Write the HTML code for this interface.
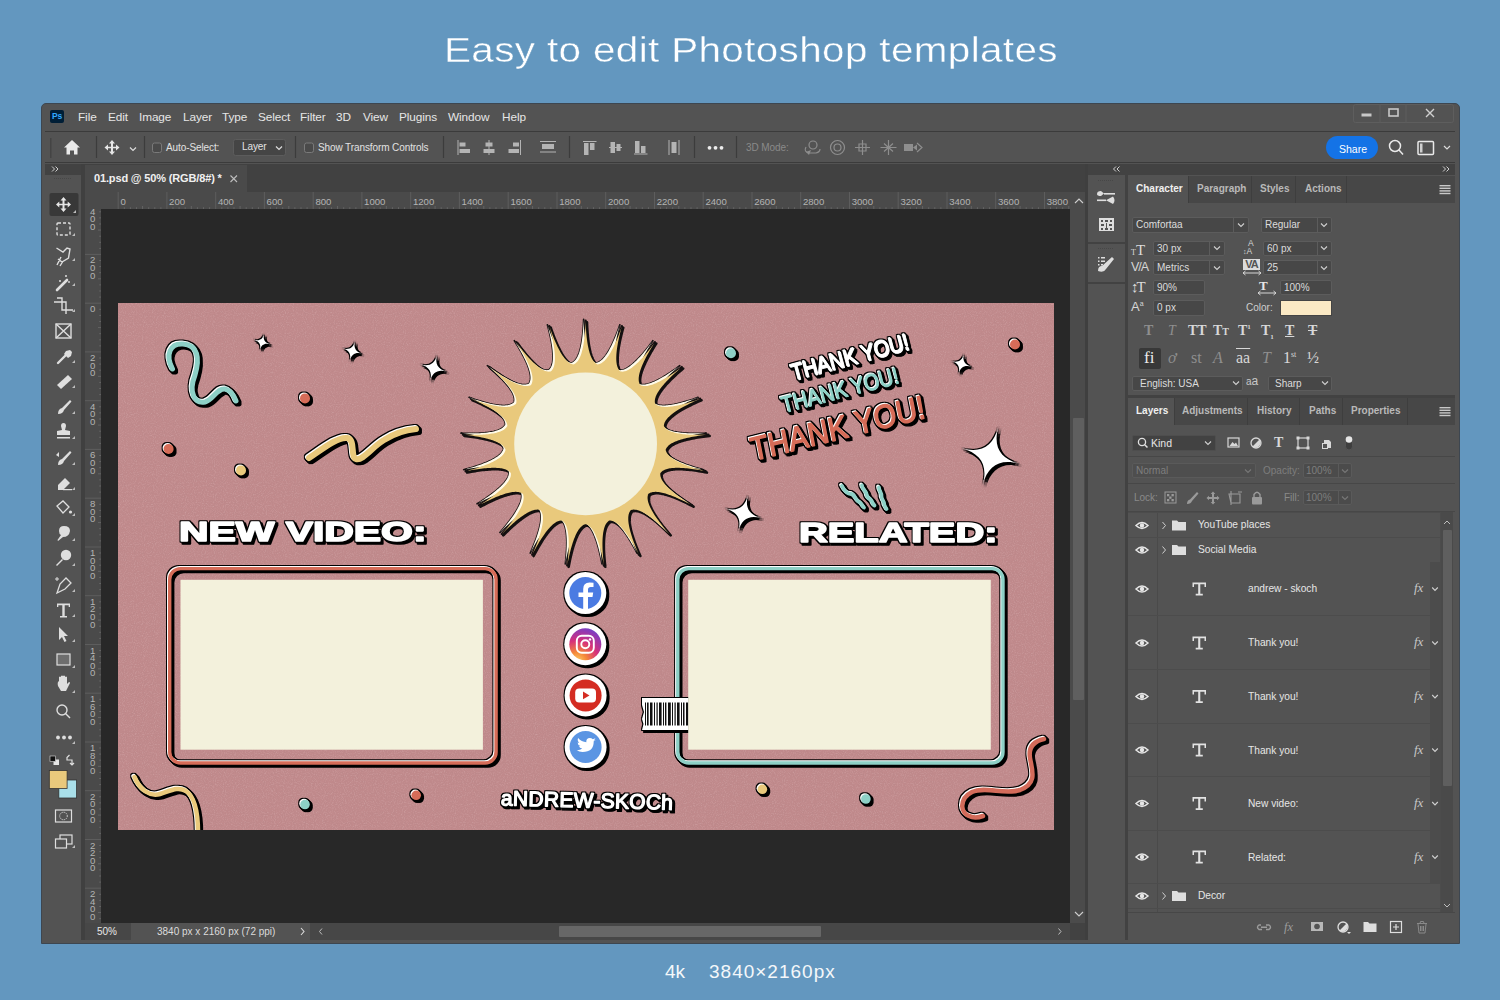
<!DOCTYPE html>
<html><head><meta charset="utf-8">
<style>
*{margin:0;padding:0;box-sizing:border-box}
html,body{width:1500px;height:1000px;overflow:hidden;background:#6397bf;font-family:"Liberation Sans",sans-serif;}
.a{position:absolute}
#title{left:444px;top:30px;white-space:nowrap;color:#fff;font-size:35px;letter-spacing:0.3px;transform:scaleX(1.156);transform-origin:0 0;-webkit-text-stroke:0.4px #6397bf}
#foot{left:0;top:960px;width:1500px;text-align:center;color:#eef3f8;font-size:18px;letter-spacing:1px}
#win{left:41px;top:103px;width:1419px;height:841px;background:#535353;border:1px solid #3d4650;border-radius:5px 5px 0 0}
.menu{top:110px;color:#e6e6e6;font-size:11.8px;letter-spacing:-0.1px}
.opt{top:142px;color:#e2e2e2;font-size:10px;letter-spacing:-0.1px}
#opt{left:45px;top:131px;width:1410px;height:32px;background:#535353;border-top:1px solid #3b3b3b;border-bottom:1px solid #3b3b3b}
#tabbar{left:45px;top:164px;width:1041px;height:28px;background:#414141}
#doctab{left:85px;top:165px;width:162px;height:27px;background:#4a4a4a;color:#f0f0f0;font-size:11px;font-weight:bold;padding:7px 0 0 9px;letter-spacing:-0.15px}
#tools{left:45px;top:164px;width:36px;height:776px;background:#535353}
#sep1{left:81px;top:164px;width:4px;height:776px;background:#404040}
#rulerT{left:85px;top:192px;width:985px;height:17px;background:#474747}
#rulerL{left:85px;top:192px;width:16px;height:731px;background:#474747}
#cv{left:101px;top:209px;width:969px;height:714px;background:#282828}
#vscroll{left:1070px;top:192px;width:18px;height:731px;background:#4a4a4a}
#status{left:85px;top:923px;width:1003px;height:17px;background:#474747;color:#ddd;font-size:10.5px}
#dock{left:1088px;top:164px;width:37px;height:776px;background:#474747}
#panel{left:1128px;top:164px;width:327px;height:776px;background:#535353}
#art{left:118px;top:303px;width:936px;height:527px;background:#c48a8e;overflow:hidden}
</style></head>
<body>
<div id="title" class="a">Easy to edit Photoshop templates</div>
<div id="win" class="a"></div>
<div id="opt" class="a"></div>

<!-- menu bar -->
<div class="a" style="left:50px;top:110px;width:14px;height:13px;background:#001e36;border-radius:2px;color:#31a8ff;font-size:8.5px;font-weight:bold;line-height:13px;text-align:center;letter-spacing:-0.2px">Ps</div>
<div class="a menu" style="left:78px">File</div>
<div class="a menu" style="left:108px">Edit</div>
<div class="a menu" style="left:139px">Image</div>
<div class="a menu" style="left:183px">Layer</div>
<div class="a menu" style="left:222px">Type</div>
<div class="a menu" style="left:258px">Select</div>
<div class="a menu" style="left:300px">Filter</div>
<div class="a menu" style="left:336px">3D</div>
<div class="a menu" style="left:363px">View</div>
<div class="a menu" style="left:399px">Plugins</div>
<div class="a menu" style="left:448px">Window</div>
<div class="a menu" style="left:502px">Help</div>
<svg class="a" style="left:1353px;top:104px" width="101" height="20" viewBox="0 0 101 20">
<rect x="0.5" y="0.5" width="100" height="18" rx="2" fill="none" stroke="#5e5e5e"/>
<line x1="27" y1="0.5" x2="27" y2="18.5" stroke="#5e5e5e"/><line x1="53" y1="0.5" x2="53" y2="18.5" stroke="#5e5e5e"/>
<rect x="8.5" y="9.5" width="10" height="3" fill="#c8c8c8"/>
<rect x="36" y="5" width="9" height="7" fill="none" stroke="#c8c8c8" stroke-width="1.6"/>
<path d="M73 5 L81 13 M81 5 L73 13" stroke="#d0d0d0" stroke-width="1.4"/>
</svg>
<!-- options bar -->
<svg class="a" style="left:45px;top:131px" width="1410" height="32" viewBox="45 131 1410 32">
<g stroke="#3c3c3c" stroke-width="1.2"><line x1="96.5" y1="136" x2="96.5" y2="158"/><line x1="144.5" y1="136" x2="144.5" y2="158"/><line x1="295.5" y1="136" x2="295.5" y2="158"/><line x1="443.5" y1="136" x2="443.5" y2="158"/><line x1="569.5" y1="136" x2="569.5" y2="158"/><line x1="694.5" y1="136" x2="694.5" y2="158"/><line x1="736.5" y1="136" x2="736.5" y2="158"/></g>
<g fill="#444"><rect x="50" y="138" width="1.5" height="20"/></g>
<path d="M72 140 L80 147.5 L77.5 147.5 L77.5 154.5 L74 154.5 L74 150.5 L70 150.5 L70 154.5 L66.5 154.5 L66.5 147.5 L64 147.5 Z" fill="#eaeaea"/>
<g fill="#e6e6e6"><path d="M112 140 L115 143.5 L113 143.5 L113 146.7 L116 146.7 L116 144.5 L119.5 147.5 L116 150.5 L116 148.3 L113 148.3 L113 151.5 L115 151.5 L112 155 L109 151.5 L111 151.5 L111 148.3 L108 148.3 L108 150.5 L104.5 147.5 L108 144.5 L108 146.7 L111 146.7 L111 143.5 L109 143.5 Z"/></g>
<path d="M130 147.5 L133 150.5 L136 147.5" fill="none" stroke="#dcdcdc" stroke-width="1.2"/>
<rect x="152.5" y="143" width="9" height="9.5" rx="2" fill="#4a4a4a" stroke="#7a7a7a"/>
<rect x="233.5" y="139.5" width="52" height="16" rx="2" fill="#454545" stroke="#5c5c5c"/>
<path d="M276 146.5 L279 149.5 L282 146.5" fill="none" stroke="#dcdcdc" stroke-width="1.2"/>
<rect x="304.5" y="143" width="9" height="9.5" rx="2" fill="#4a4a4a" stroke="#7a7a7a"/>
<g fill="#b4b4b4">
<rect x="457.5" y="140" width="1" height="15"/><rect x="459.5" y="142.5" width="6" height="4"/><rect x="459.5" y="149" width="10.5" height="4"/>
<rect x="488.5" y="140" width="1" height="15"/><rect x="485.5" y="142.5" width="7" height="4"/><rect x="483.5" y="149" width="11" height="4"/>
<rect x="520" y="140" width="1" height="15"/><rect x="513" y="142.5" width="6" height="4"/><rect x="508.5" y="149" width="10.5" height="4"/>
<rect x="540" y="141" width="16" height="1"/><rect x="542" y="144" width="12" height="5"/><rect x="540" y="151.5" width="16" height="1"/>
<rect x="583" y="141" width="13.5" height="1"/><rect x="584" y="143" width="4.5" height="12"/><rect x="590" y="143" width="4.5" height="7"/>
<rect x="609" y="147" width="13" height="1"/><rect x="610.5" y="142" width="4.5" height="11"/><rect x="616.5" y="144" width="4" height="7"/>
<rect x="634" y="153.5" width="13.5" height="1"/><rect x="635" y="141" width="4.5" height="12"/><rect x="641" y="146" width="4.5" height="7"/>
<rect x="668.5" y="140" width="1" height="15"/><rect x="678.5" y="140" width="1" height="15"/><rect x="671.5" y="142" width="5" height="11"/>
</g>
<g fill="#ececec"><circle cx="709.5" cy="147.8" r="1.9"/><circle cx="715.5" cy="147.8" r="1.9"/><circle cx="721.5" cy="147.8" r="1.9"/></g>
<g fill="none" stroke="#8e8e8e" stroke-width="1.2">
<circle cx="813" cy="145" r="4"/><path d="M806 147 Q803 152 810 153 L816 153 Q820 152 820 149"/>
<circle cx="837.5" cy="147.5" r="7"/><circle cx="837.5" cy="147.5" r="3.5"/>
<path d="M862.5 140 L862.5 155 M855 147.5 L870 147.5 M859 144 L866 144 L866 151 L859 151 Z"/>
<path d="M888.5 140 L888.5 155 M880.5 147.5 L896.5 147.5 M884 143.5 L893 151.5 M893 143.5 L884 151.5"/>
<path d="M917 143 L922 147.5 L917 152"/>
</g>
<g fill="#8e8e8e"><path d="M806 152 L811 150 L809 155 Z"/><rect x="904" y="144" width="9" height="7"/><path d="M913 147.5 L917 144.5 L917 150.5 Z"/></g>
<rect x="1326" y="136" width="52" height="23" rx="11.5" fill="#1473e6"/>
<g fill="none" stroke="#eaeaea" stroke-width="1.5"><circle cx="1395" cy="146" r="5.5"/><path d="M1399 150 L1403 154.5"/>
<rect x="1418" y="141.5" width="15.5" height="13" rx="1"/></g>
<rect x="1420" y="143.5" width="2.5" height="9" fill="#cfcfcf"/>
<path d="M1444 146 L1447 149 L1450 146" fill="none" stroke="#dcdcdc" stroke-width="1.2"/>
</svg>
<div class="a opt" style="left:166px">Auto-Select:</div>
<div class="a opt" style="left:242px;top:141px">Layer</div>
<div class="a opt" style="left:318px">Show Transform Controls</div>
<div class="a opt" style="left:746px;color:#8a8a8a">3D Mode:</div>
<div class="a" style="left:1339px;top:142.5px;color:#fff;font-size:10.5px">Share</div>

<div id="tabbar" class="a"></div>
<div id="doctab" class="a">01.psd @ 50% (RGB/8#) *</div>
<svg class="a" style="left:229px;top:174px" width="10" height="10"><path d="M1.5 1.5 L8 8 M8 1.5 L1.5 8" stroke="#bdbdbd" stroke-width="1.1"/></svg>
<div id="tools" class="a"></div>

<!-- left tools -->
<div class="a" style="left:45px;top:164px;width:36px;height:11px;background:#424242"></div>

<svg class="a" style="left:45px;top:175px" width="36" height="700" viewBox="45 175 36 700">
<g stroke="#474747" stroke-width="1"><path d="M54 178.5 H72" stroke-dasharray="1 1"/></g>
<rect x="49.5" y="193" width="29" height="23" rx="2" fill="#383838"/>
<g fill="#e6e6e6">
<path d="M63.5 197 L66.5 200.5 L64.5 200.5 L64.5 203.7 L67.7 203.7 L67.7 201.5 L71 204.5 L67.7 207.5 L67.7 205.3 L64.5 205.3 L64.5 208.5 L66.5 208.5 L63.5 212 L60.5 208.5 L62.5 208.5 L62.5 205.3 L59.3 205.3 L59.3 207.5 L56 204.5 L59.3 201.5 L59.3 203.7 L62.5 203.7 L62.5 200.5 L60.5 200.5 Z"/>
</g>
<g fill="#bdbdbd">
<path d="M76 213 L76 210 L73 213Z"/><path d="M75 236 L75 233 L72 236Z"/><path d="M75 261 L75 258 L72 261Z"/><path d="M75 286 L75 283 L72 286Z"/><path d="M75 312 L75 309 L72 312Z"/>
<path d="M75 363 L75 360 L72 363Z"/><path d="M75 388 L75 385 L72 388Z"/><path d="M75 414 L75 411 L72 414Z"/><path d="M75 439 L75 436 L72 439Z"/><path d="M75 465 L75 462 L72 465Z"/><path d="M75 490 L75 487 L72 490Z"/>
<path d="M75 516 L75 513 L72 516Z"/><path d="M75 541 L75 538 L72 541Z"/><path d="M75 566 L75 563 L72 566Z"/><path d="M75 592 L75 589 L72 592Z"/><path d="M75 617 L75 614 L72 617Z"/><path d="M75 642 L75 639 L72 642Z"/><path d="M75 668 L75 665 L72 668Z"/>
<path d="M75 693 L75 690 L72 693Z"/><path d="M75 744 L75 741 L72 744Z"/><path d="M75 848 L75 845 L72 848Z"/>
</g>
<g fill="none" stroke="#dedede" stroke-width="1.4">
<rect x="57" y="223" width="13" height="12" rx="1" stroke-dasharray="3 2"/>
<path d="M56.5 248 L63 252 L67 248 L70 249 L68.5 258 L62 262 L58 259 M61 257 L57 265 M62.5 262 L60 266"/>
<path d="M57 290 L67 280" stroke-width="2.6" stroke-linecap="round"/>
<path d="M57 298 L62 298 L62 310 L73 310 M66 314 L66 302 L54 302"/>
<rect x="56" y="324" width="15" height="14"/><path d="M56 324 L71 338 M71 324 L56 338"/>
<path d="M58 363 L66 355" stroke-width="2.4" stroke-linecap="round"/>
</g>
<g fill="#dedede">
<circle cx="60" cy="281" r="1"/><circle cx="66" cy="276" r="1"/><circle cx="69" cy="282" r="0.9"/>
<path d="M66 351 L70 350 L72 352 L71 356 L68 358 L64 354 Z"/>
<path d="M57 385 L68 375 L72 379 L61 389 Z"/>
<path d="M58 414 Q58 409 62 408 L70 400 L71.5 401.5 L64 410 Q63 414 58 414Z"/>
<path d="M61 426 Q61 423 63.5 423 Q66 423 66 426 L65 430 L70 431 L70 435 L57 435 L57 431 L62 430 Z"/><rect x="57" y="437" width="13" height="1.5"/>
<path d="M58 465 Q58 460 62 459 L70 451 L71.5 452.5 L64 461 Q63 465 58 465Z"/><path d="M56 455 L59 452 L59 457 Z"/>
<path d="M58 485 L65 478 L70 483 L63 490 L58 490 Z"/><rect x="63" y="489" width="9" height="1.2"/>
<path d="M57 506 L63 501 L69 507 L63 513 Z" fill="none" stroke="#dedede" stroke-width="1.3"/><circle cx="70.5" cy="512" r="1.6"/>
<path d="M59 531 Q59 526 64 526 Q70 526 70 531 Q69 537 63 537 L58 541 L57.5 540 L61 535 Q59 534 59 531Z"/>
<circle cx="66" cy="555" r="5.2"/><path d="M56 565 L62 559 L63 560 L57 566 Z"/>
<path d="M57 593 L60 584 L66 578 L71 583 L65 589 Z" fill="none" stroke="#dedede" stroke-width="1.3"/><path d="M55 579 h4 M57 577 v4" stroke="#dedede" stroke-width="1"/>
<path d="M57 603.5 H70 V607 H68.7 V605.2 H64.7 V616 H67 V617.5 H60 V616 H62.3 V605.2 H58.3 V607 H57 Z"/>
<path d="M59 627 L59 640 L62 637 L64.5 642 L66.5 641 L64 636 L68 636 Z"/>
<rect x="57" y="654" width="13" height="11" fill="#6e6e6e" stroke="#dedede" stroke-width="1.2"/>
<path d="M58 686 Q57 682 59 681 L59 677 Q60 676 61 677 L61 681 L61 676 Q62 675 63 676 L63 681 L63 676 Q64 675 65 676 L65 681 L65 677 Q66 676 67 677 L67 684 L69 682 Q70 682 70 683 L66 691 L61 691 Z"/>
<circle cx="70" cy="737.5" r="1.9"/><circle cx="64" cy="737.5" r="1.9"/><circle cx="58" cy="737.5" r="1.9"/>
</g>
<g fill="none" stroke="#dedede" stroke-width="1.4"><circle cx="62" cy="710" r="5"/><path d="M65.5 713.5 L70 718"/></g>
<rect x="53.5" y="759.5" width="5.5" height="5.5" fill="#e6e6e6"/><rect x="50" y="756" width="5.5" height="5.5" fill="#111" stroke="#ddd" stroke-width="0.6"/>
<path d="M67 757 L67 760 L72 760 L72 764 M69.5 755 L67 757.5 M70 763 L72 765 L74 763" fill="none" stroke="#dedede" stroke-width="1.2"/>
<rect x="58.8" y="780" width="17.8" height="18" fill="#a9dfe9" stroke="#333" stroke-width="0.8"/>
<rect x="49.3" y="770.5" width="17.8" height="18" fill="#e9c97c" stroke="#333" stroke-width="0.8"/>
<rect x="55.5" y="810" width="16" height="12" fill="none" stroke="#dedede" stroke-width="1.2"/><circle cx="63.5" cy="816" r="3.8" fill="none" stroke="#dedede" stroke-width="1" stroke-dasharray="1.2 1"/>
<rect x="60" y="835" width="12" height="9" fill="#535353" stroke="#dedede" stroke-width="1.2"/><rect x="55.5" y="839" width="11" height="9" fill="#535353" stroke="#dedede" stroke-width="1.2"/>
</svg>

<div id="sep1" class="a"></div>

<div id="cv" class="a"></div>
<svg class="a" style="left:85px;top:192px" width="1003" height="731" viewBox="85 192 1003 731">
<rect x="85" y="192" width="1003" height="17" fill="#4a4a4a"/>
<rect x="85" y="192" width="16" height="731" fill="#4a4a4a"/>
<rect x="1070" y="192" width="18" height="731" fill="#4b4b4b"/>
<line x1="118.2" y1="192" x2="118.2" y2="209" stroke="#5d5d5d" stroke-width="1"/>
<line x1="124.3" y1="207.2" x2="124.3" y2="209" stroke="#676767" stroke-width="0.9"/>
<line x1="130.4" y1="207.2" x2="130.4" y2="209" stroke="#676767" stroke-width="0.9"/>
<line x1="136.5" y1="207.2" x2="136.5" y2="209" stroke="#676767" stroke-width="0.9"/>
<line x1="142.6" y1="206" x2="142.6" y2="209" stroke="#676767" stroke-width="0.9"/>
<line x1="148.7" y1="207.2" x2="148.7" y2="209" stroke="#676767" stroke-width="0.9"/>
<line x1="154.8" y1="207.2" x2="154.8" y2="209" stroke="#676767" stroke-width="0.9"/>
<line x1="160.9" y1="207.2" x2="160.9" y2="209" stroke="#676767" stroke-width="0.9"/>
<line x1="166.9" y1="192" x2="166.9" y2="209" stroke="#5d5d5d" stroke-width="1"/>
<line x1="173.0" y1="207.2" x2="173.0" y2="209" stroke="#676767" stroke-width="0.9"/>
<line x1="179.1" y1="207.2" x2="179.1" y2="209" stroke="#676767" stroke-width="0.9"/>
<line x1="185.2" y1="207.2" x2="185.2" y2="209" stroke="#676767" stroke-width="0.9"/>
<line x1="191.3" y1="206" x2="191.3" y2="209" stroke="#676767" stroke-width="0.9"/>
<line x1="197.4" y1="207.2" x2="197.4" y2="209" stroke="#676767" stroke-width="0.9"/>
<line x1="203.5" y1="207.2" x2="203.5" y2="209" stroke="#676767" stroke-width="0.9"/>
<line x1="209.6" y1="207.2" x2="209.6" y2="209" stroke="#676767" stroke-width="0.9"/>
<line x1="215.7" y1="192" x2="215.7" y2="209" stroke="#5d5d5d" stroke-width="1"/>
<line x1="221.8" y1="207.2" x2="221.8" y2="209" stroke="#676767" stroke-width="0.9"/>
<line x1="227.9" y1="207.2" x2="227.9" y2="209" stroke="#676767" stroke-width="0.9"/>
<line x1="234.0" y1="207.2" x2="234.0" y2="209" stroke="#676767" stroke-width="0.9"/>
<line x1="240.1" y1="206" x2="240.1" y2="209" stroke="#676767" stroke-width="0.9"/>
<line x1="246.2" y1="207.2" x2="246.2" y2="209" stroke="#676767" stroke-width="0.9"/>
<line x1="252.3" y1="207.2" x2="252.3" y2="209" stroke="#676767" stroke-width="0.9"/>
<line x1="258.4" y1="207.2" x2="258.4" y2="209" stroke="#676767" stroke-width="0.9"/>
<line x1="264.4" y1="192" x2="264.4" y2="209" stroke="#5d5d5d" stroke-width="1"/>
<line x1="270.5" y1="207.2" x2="270.5" y2="209" stroke="#676767" stroke-width="0.9"/>
<line x1="276.6" y1="207.2" x2="276.6" y2="209" stroke="#676767" stroke-width="0.9"/>
<line x1="282.7" y1="207.2" x2="282.7" y2="209" stroke="#676767" stroke-width="0.9"/>
<line x1="288.8" y1="206" x2="288.8" y2="209" stroke="#676767" stroke-width="0.9"/>
<line x1="294.9" y1="207.2" x2="294.9" y2="209" stroke="#676767" stroke-width="0.9"/>
<line x1="301.0" y1="207.2" x2="301.0" y2="209" stroke="#676767" stroke-width="0.9"/>
<line x1="307.1" y1="207.2" x2="307.1" y2="209" stroke="#676767" stroke-width="0.9"/>
<line x1="313.2" y1="192" x2="313.2" y2="209" stroke="#5d5d5d" stroke-width="1"/>
<line x1="319.3" y1="207.2" x2="319.3" y2="209" stroke="#676767" stroke-width="0.9"/>
<line x1="325.4" y1="207.2" x2="325.4" y2="209" stroke="#676767" stroke-width="0.9"/>
<line x1="331.5" y1="207.2" x2="331.5" y2="209" stroke="#676767" stroke-width="0.9"/>
<line x1="337.6" y1="206" x2="337.6" y2="209" stroke="#676767" stroke-width="0.9"/>
<line x1="343.7" y1="207.2" x2="343.7" y2="209" stroke="#676767" stroke-width="0.9"/>
<line x1="349.8" y1="207.2" x2="349.8" y2="209" stroke="#676767" stroke-width="0.9"/>
<line x1="355.9" y1="207.2" x2="355.9" y2="209" stroke="#676767" stroke-width="0.9"/>
<line x1="361.9" y1="192" x2="361.9" y2="209" stroke="#5d5d5d" stroke-width="1"/>
<line x1="368.0" y1="207.2" x2="368.0" y2="209" stroke="#676767" stroke-width="0.9"/>
<line x1="374.1" y1="207.2" x2="374.1" y2="209" stroke="#676767" stroke-width="0.9"/>
<line x1="380.2" y1="207.2" x2="380.2" y2="209" stroke="#676767" stroke-width="0.9"/>
<line x1="386.3" y1="206" x2="386.3" y2="209" stroke="#676767" stroke-width="0.9"/>
<line x1="392.4" y1="207.2" x2="392.4" y2="209" stroke="#676767" stroke-width="0.9"/>
<line x1="398.5" y1="207.2" x2="398.5" y2="209" stroke="#676767" stroke-width="0.9"/>
<line x1="404.6" y1="207.2" x2="404.6" y2="209" stroke="#676767" stroke-width="0.9"/>
<line x1="410.7" y1="192" x2="410.7" y2="209" stroke="#5d5d5d" stroke-width="1"/>
<line x1="416.8" y1="207.2" x2="416.8" y2="209" stroke="#676767" stroke-width="0.9"/>
<line x1="422.9" y1="207.2" x2="422.9" y2="209" stroke="#676767" stroke-width="0.9"/>
<line x1="429.0" y1="207.2" x2="429.0" y2="209" stroke="#676767" stroke-width="0.9"/>
<line x1="435.1" y1="206" x2="435.1" y2="209" stroke="#676767" stroke-width="0.9"/>
<line x1="441.2" y1="207.2" x2="441.2" y2="209" stroke="#676767" stroke-width="0.9"/>
<line x1="447.3" y1="207.2" x2="447.3" y2="209" stroke="#676767" stroke-width="0.9"/>
<line x1="453.4" y1="207.2" x2="453.4" y2="209" stroke="#676767" stroke-width="0.9"/>
<line x1="459.4" y1="192" x2="459.4" y2="209" stroke="#5d5d5d" stroke-width="1"/>
<line x1="465.5" y1="207.2" x2="465.5" y2="209" stroke="#676767" stroke-width="0.9"/>
<line x1="471.6" y1="207.2" x2="471.6" y2="209" stroke="#676767" stroke-width="0.9"/>
<line x1="477.7" y1="207.2" x2="477.7" y2="209" stroke="#676767" stroke-width="0.9"/>
<line x1="483.8" y1="206" x2="483.8" y2="209" stroke="#676767" stroke-width="0.9"/>
<line x1="489.9" y1="207.2" x2="489.9" y2="209" stroke="#676767" stroke-width="0.9"/>
<line x1="496.0" y1="207.2" x2="496.0" y2="209" stroke="#676767" stroke-width="0.9"/>
<line x1="502.1" y1="207.2" x2="502.1" y2="209" stroke="#676767" stroke-width="0.9"/>
<line x1="508.2" y1="192" x2="508.2" y2="209" stroke="#5d5d5d" stroke-width="1"/>
<line x1="514.3" y1="207.2" x2="514.3" y2="209" stroke="#676767" stroke-width="0.9"/>
<line x1="520.4" y1="207.2" x2="520.4" y2="209" stroke="#676767" stroke-width="0.9"/>
<line x1="526.5" y1="207.2" x2="526.5" y2="209" stroke="#676767" stroke-width="0.9"/>
<line x1="532.6" y1="206" x2="532.6" y2="209" stroke="#676767" stroke-width="0.9"/>
<line x1="538.7" y1="207.2" x2="538.7" y2="209" stroke="#676767" stroke-width="0.9"/>
<line x1="544.8" y1="207.2" x2="544.8" y2="209" stroke="#676767" stroke-width="0.9"/>
<line x1="550.9" y1="207.2" x2="550.9" y2="209" stroke="#676767" stroke-width="0.9"/>
<line x1="557.0" y1="192" x2="557.0" y2="209" stroke="#5d5d5d" stroke-width="1"/>
<line x1="563.0" y1="207.2" x2="563.0" y2="209" stroke="#676767" stroke-width="0.9"/>
<line x1="569.1" y1="207.2" x2="569.1" y2="209" stroke="#676767" stroke-width="0.9"/>
<line x1="575.2" y1="207.2" x2="575.2" y2="209" stroke="#676767" stroke-width="0.9"/>
<line x1="581.3" y1="206" x2="581.3" y2="209" stroke="#676767" stroke-width="0.9"/>
<line x1="587.4" y1="207.2" x2="587.4" y2="209" stroke="#676767" stroke-width="0.9"/>
<line x1="593.5" y1="207.2" x2="593.5" y2="209" stroke="#676767" stroke-width="0.9"/>
<line x1="599.6" y1="207.2" x2="599.6" y2="209" stroke="#676767" stroke-width="0.9"/>
<line x1="605.7" y1="192" x2="605.7" y2="209" stroke="#5d5d5d" stroke-width="1"/>
<line x1="611.8" y1="207.2" x2="611.8" y2="209" stroke="#676767" stroke-width="0.9"/>
<line x1="617.9" y1="207.2" x2="617.9" y2="209" stroke="#676767" stroke-width="0.9"/>
<line x1="624.0" y1="207.2" x2="624.0" y2="209" stroke="#676767" stroke-width="0.9"/>
<line x1="630.1" y1="206" x2="630.1" y2="209" stroke="#676767" stroke-width="0.9"/>
<line x1="636.2" y1="207.2" x2="636.2" y2="209" stroke="#676767" stroke-width="0.9"/>
<line x1="642.3" y1="207.2" x2="642.3" y2="209" stroke="#676767" stroke-width="0.9"/>
<line x1="648.4" y1="207.2" x2="648.4" y2="209" stroke="#676767" stroke-width="0.9"/>
<line x1="654.5" y1="192" x2="654.5" y2="209" stroke="#5d5d5d" stroke-width="1"/>
<line x1="660.5" y1="207.2" x2="660.5" y2="209" stroke="#676767" stroke-width="0.9"/>
<line x1="666.6" y1="207.2" x2="666.6" y2="209" stroke="#676767" stroke-width="0.9"/>
<line x1="672.7" y1="207.2" x2="672.7" y2="209" stroke="#676767" stroke-width="0.9"/>
<line x1="678.8" y1="206" x2="678.8" y2="209" stroke="#676767" stroke-width="0.9"/>
<line x1="684.9" y1="207.2" x2="684.9" y2="209" stroke="#676767" stroke-width="0.9"/>
<line x1="691.0" y1="207.2" x2="691.0" y2="209" stroke="#676767" stroke-width="0.9"/>
<line x1="697.1" y1="207.2" x2="697.1" y2="209" stroke="#676767" stroke-width="0.9"/>
<line x1="703.2" y1="192" x2="703.2" y2="209" stroke="#5d5d5d" stroke-width="1"/>
<line x1="709.3" y1="207.2" x2="709.3" y2="209" stroke="#676767" stroke-width="0.9"/>
<line x1="715.4" y1="207.2" x2="715.4" y2="209" stroke="#676767" stroke-width="0.9"/>
<line x1="721.5" y1="207.2" x2="721.5" y2="209" stroke="#676767" stroke-width="0.9"/>
<line x1="727.6" y1="206" x2="727.6" y2="209" stroke="#676767" stroke-width="0.9"/>
<line x1="733.7" y1="207.2" x2="733.7" y2="209" stroke="#676767" stroke-width="0.9"/>
<line x1="739.8" y1="207.2" x2="739.8" y2="209" stroke="#676767" stroke-width="0.9"/>
<line x1="745.9" y1="207.2" x2="745.9" y2="209" stroke="#676767" stroke-width="0.9"/>
<line x1="752.0" y1="192" x2="752.0" y2="209" stroke="#5d5d5d" stroke-width="1"/>
<line x1="758.0" y1="207.2" x2="758.0" y2="209" stroke="#676767" stroke-width="0.9"/>
<line x1="764.1" y1="207.2" x2="764.1" y2="209" stroke="#676767" stroke-width="0.9"/>
<line x1="770.2" y1="207.2" x2="770.2" y2="209" stroke="#676767" stroke-width="0.9"/>
<line x1="776.3" y1="206" x2="776.3" y2="209" stroke="#676767" stroke-width="0.9"/>
<line x1="782.4" y1="207.2" x2="782.4" y2="209" stroke="#676767" stroke-width="0.9"/>
<line x1="788.5" y1="207.2" x2="788.5" y2="209" stroke="#676767" stroke-width="0.9"/>
<line x1="794.6" y1="207.2" x2="794.6" y2="209" stroke="#676767" stroke-width="0.9"/>
<line x1="800.7" y1="192" x2="800.7" y2="209" stroke="#5d5d5d" stroke-width="1"/>
<line x1="806.8" y1="207.2" x2="806.8" y2="209" stroke="#676767" stroke-width="0.9"/>
<line x1="812.9" y1="207.2" x2="812.9" y2="209" stroke="#676767" stroke-width="0.9"/>
<line x1="819.0" y1="207.2" x2="819.0" y2="209" stroke="#676767" stroke-width="0.9"/>
<line x1="825.1" y1="206" x2="825.1" y2="209" stroke="#676767" stroke-width="0.9"/>
<line x1="831.2" y1="207.2" x2="831.2" y2="209" stroke="#676767" stroke-width="0.9"/>
<line x1="837.3" y1="207.2" x2="837.3" y2="209" stroke="#676767" stroke-width="0.9"/>
<line x1="843.4" y1="207.2" x2="843.4" y2="209" stroke="#676767" stroke-width="0.9"/>
<line x1="849.5" y1="192" x2="849.5" y2="209" stroke="#5d5d5d" stroke-width="1"/>
<line x1="855.5" y1="207.2" x2="855.5" y2="209" stroke="#676767" stroke-width="0.9"/>
<line x1="861.6" y1="207.2" x2="861.6" y2="209" stroke="#676767" stroke-width="0.9"/>
<line x1="867.7" y1="207.2" x2="867.7" y2="209" stroke="#676767" stroke-width="0.9"/>
<line x1="873.8" y1="206" x2="873.8" y2="209" stroke="#676767" stroke-width="0.9"/>
<line x1="879.9" y1="207.2" x2="879.9" y2="209" stroke="#676767" stroke-width="0.9"/>
<line x1="886.0" y1="207.2" x2="886.0" y2="209" stroke="#676767" stroke-width="0.9"/>
<line x1="892.1" y1="207.2" x2="892.1" y2="209" stroke="#676767" stroke-width="0.9"/>
<line x1="898.2" y1="192" x2="898.2" y2="209" stroke="#5d5d5d" stroke-width="1"/>
<line x1="904.3" y1="207.2" x2="904.3" y2="209" stroke="#676767" stroke-width="0.9"/>
<line x1="910.4" y1="207.2" x2="910.4" y2="209" stroke="#676767" stroke-width="0.9"/>
<line x1="916.5" y1="207.2" x2="916.5" y2="209" stroke="#676767" stroke-width="0.9"/>
<line x1="922.6" y1="206" x2="922.6" y2="209" stroke="#676767" stroke-width="0.9"/>
<line x1="928.7" y1="207.2" x2="928.7" y2="209" stroke="#676767" stroke-width="0.9"/>
<line x1="934.8" y1="207.2" x2="934.8" y2="209" stroke="#676767" stroke-width="0.9"/>
<line x1="940.9" y1="207.2" x2="940.9" y2="209" stroke="#676767" stroke-width="0.9"/>
<line x1="947.0" y1="192" x2="947.0" y2="209" stroke="#5d5d5d" stroke-width="1"/>
<line x1="953.0" y1="207.2" x2="953.0" y2="209" stroke="#676767" stroke-width="0.9"/>
<line x1="959.1" y1="207.2" x2="959.1" y2="209" stroke="#676767" stroke-width="0.9"/>
<line x1="965.2" y1="207.2" x2="965.2" y2="209" stroke="#676767" stroke-width="0.9"/>
<line x1="971.3" y1="206" x2="971.3" y2="209" stroke="#676767" stroke-width="0.9"/>
<line x1="977.4" y1="207.2" x2="977.4" y2="209" stroke="#676767" stroke-width="0.9"/>
<line x1="983.5" y1="207.2" x2="983.5" y2="209" stroke="#676767" stroke-width="0.9"/>
<line x1="989.6" y1="207.2" x2="989.6" y2="209" stroke="#676767" stroke-width="0.9"/>
<line x1="995.7" y1="192" x2="995.7" y2="209" stroke="#5d5d5d" stroke-width="1"/>
<line x1="1001.8" y1="207.2" x2="1001.8" y2="209" stroke="#676767" stroke-width="0.9"/>
<line x1="1007.9" y1="207.2" x2="1007.9" y2="209" stroke="#676767" stroke-width="0.9"/>
<line x1="1014.0" y1="207.2" x2="1014.0" y2="209" stroke="#676767" stroke-width="0.9"/>
<line x1="1020.1" y1="206" x2="1020.1" y2="209" stroke="#676767" stroke-width="0.9"/>
<line x1="1026.2" y1="207.2" x2="1026.2" y2="209" stroke="#676767" stroke-width="0.9"/>
<line x1="1032.3" y1="207.2" x2="1032.3" y2="209" stroke="#676767" stroke-width="0.9"/>
<line x1="1038.4" y1="207.2" x2="1038.4" y2="209" stroke="#676767" stroke-width="0.9"/>
<line x1="1044.5" y1="192" x2="1044.5" y2="209" stroke="#5d5d5d" stroke-width="1"/>
<line x1="1050.5" y1="207.2" x2="1050.5" y2="209" stroke="#676767" stroke-width="0.9"/>
<line x1="1056.6" y1="207.2" x2="1056.6" y2="209" stroke="#676767" stroke-width="0.9"/>
<line x1="1062.7" y1="207.2" x2="1062.7" y2="209" stroke="#676767" stroke-width="0.9"/>
<line x1="1068.8" y1="206" x2="1068.8" y2="209" stroke="#676767" stroke-width="0.9"/>
<line x1="85" y1="205.7" x2="101" y2="205.7" stroke="#5d5d5d" stroke-width="1"/>
<line x1="99.2" y1="211.8" x2="101" y2="211.8" stroke="#676767" stroke-width="0.9"/>
<line x1="99.2" y1="217.9" x2="101" y2="217.9" stroke="#676767" stroke-width="0.9"/>
<line x1="99.2" y1="224.0" x2="101" y2="224.0" stroke="#676767" stroke-width="0.9"/>
<line x1="98" y1="230.1" x2="101" y2="230.1" stroke="#676767" stroke-width="0.9"/>
<line x1="99.2" y1="236.2" x2="101" y2="236.2" stroke="#676767" stroke-width="0.9"/>
<line x1="99.2" y1="242.3" x2="101" y2="242.3" stroke="#676767" stroke-width="0.9"/>
<line x1="99.2" y1="248.4" x2="101" y2="248.4" stroke="#676767" stroke-width="0.9"/>
<line x1="85" y1="254.4" x2="101" y2="254.4" stroke="#5d5d5d" stroke-width="1"/>
<line x1="99.2" y1="260.5" x2="101" y2="260.5" stroke="#676767" stroke-width="0.9"/>
<line x1="99.2" y1="266.6" x2="101" y2="266.6" stroke="#676767" stroke-width="0.9"/>
<line x1="99.2" y1="272.7" x2="101" y2="272.7" stroke="#676767" stroke-width="0.9"/>
<line x1="98" y1="278.8" x2="101" y2="278.8" stroke="#676767" stroke-width="0.9"/>
<line x1="99.2" y1="284.9" x2="101" y2="284.9" stroke="#676767" stroke-width="0.9"/>
<line x1="99.2" y1="291.0" x2="101" y2="291.0" stroke="#676767" stroke-width="0.9"/>
<line x1="99.2" y1="297.1" x2="101" y2="297.1" stroke="#676767" stroke-width="0.9"/>
<line x1="85" y1="303.2" x2="101" y2="303.2" stroke="#5d5d5d" stroke-width="1"/>
<line x1="99.2" y1="309.3" x2="101" y2="309.3" stroke="#676767" stroke-width="0.9"/>
<line x1="99.2" y1="315.4" x2="101" y2="315.4" stroke="#676767" stroke-width="0.9"/>
<line x1="99.2" y1="321.5" x2="101" y2="321.5" stroke="#676767" stroke-width="0.9"/>
<line x1="98" y1="327.6" x2="101" y2="327.6" stroke="#676767" stroke-width="0.9"/>
<line x1="99.2" y1="333.7" x2="101" y2="333.7" stroke="#676767" stroke-width="0.9"/>
<line x1="99.2" y1="339.8" x2="101" y2="339.8" stroke="#676767" stroke-width="0.9"/>
<line x1="99.2" y1="345.9" x2="101" y2="345.9" stroke="#676767" stroke-width="0.9"/>
<line x1="85" y1="351.9" x2="101" y2="351.9" stroke="#5d5d5d" stroke-width="1"/>
<line x1="99.2" y1="358.0" x2="101" y2="358.0" stroke="#676767" stroke-width="0.9"/>
<line x1="99.2" y1="364.1" x2="101" y2="364.1" stroke="#676767" stroke-width="0.9"/>
<line x1="99.2" y1="370.2" x2="101" y2="370.2" stroke="#676767" stroke-width="0.9"/>
<line x1="98" y1="376.3" x2="101" y2="376.3" stroke="#676767" stroke-width="0.9"/>
<line x1="99.2" y1="382.4" x2="101" y2="382.4" stroke="#676767" stroke-width="0.9"/>
<line x1="99.2" y1="388.5" x2="101" y2="388.5" stroke="#676767" stroke-width="0.9"/>
<line x1="99.2" y1="394.6" x2="101" y2="394.6" stroke="#676767" stroke-width="0.9"/>
<line x1="85" y1="400.7" x2="101" y2="400.7" stroke="#5d5d5d" stroke-width="1"/>
<line x1="99.2" y1="406.8" x2="101" y2="406.8" stroke="#676767" stroke-width="0.9"/>
<line x1="99.2" y1="412.9" x2="101" y2="412.9" stroke="#676767" stroke-width="0.9"/>
<line x1="99.2" y1="419.0" x2="101" y2="419.0" stroke="#676767" stroke-width="0.9"/>
<line x1="98" y1="425.1" x2="101" y2="425.1" stroke="#676767" stroke-width="0.9"/>
<line x1="99.2" y1="431.2" x2="101" y2="431.2" stroke="#676767" stroke-width="0.9"/>
<line x1="99.2" y1="437.3" x2="101" y2="437.3" stroke="#676767" stroke-width="0.9"/>
<line x1="99.2" y1="443.4" x2="101" y2="443.4" stroke="#676767" stroke-width="0.9"/>
<line x1="85" y1="449.4" x2="101" y2="449.4" stroke="#5d5d5d" stroke-width="1"/>
<line x1="99.2" y1="455.5" x2="101" y2="455.5" stroke="#676767" stroke-width="0.9"/>
<line x1="99.2" y1="461.6" x2="101" y2="461.6" stroke="#676767" stroke-width="0.9"/>
<line x1="99.2" y1="467.7" x2="101" y2="467.7" stroke="#676767" stroke-width="0.9"/>
<line x1="98" y1="473.8" x2="101" y2="473.8" stroke="#676767" stroke-width="0.9"/>
<line x1="99.2" y1="479.9" x2="101" y2="479.9" stroke="#676767" stroke-width="0.9"/>
<line x1="99.2" y1="486.0" x2="101" y2="486.0" stroke="#676767" stroke-width="0.9"/>
<line x1="99.2" y1="492.1" x2="101" y2="492.1" stroke="#676767" stroke-width="0.9"/>
<line x1="85" y1="498.2" x2="101" y2="498.2" stroke="#5d5d5d" stroke-width="1"/>
<line x1="99.2" y1="504.3" x2="101" y2="504.3" stroke="#676767" stroke-width="0.9"/>
<line x1="99.2" y1="510.4" x2="101" y2="510.4" stroke="#676767" stroke-width="0.9"/>
<line x1="99.2" y1="516.5" x2="101" y2="516.5" stroke="#676767" stroke-width="0.9"/>
<line x1="98" y1="522.6" x2="101" y2="522.6" stroke="#676767" stroke-width="0.9"/>
<line x1="99.2" y1="528.7" x2="101" y2="528.7" stroke="#676767" stroke-width="0.9"/>
<line x1="99.2" y1="534.8" x2="101" y2="534.8" stroke="#676767" stroke-width="0.9"/>
<line x1="99.2" y1="540.9" x2="101" y2="540.9" stroke="#676767" stroke-width="0.9"/>
<line x1="85" y1="547.0" x2="101" y2="547.0" stroke="#5d5d5d" stroke-width="1"/>
<line x1="99.2" y1="553.0" x2="101" y2="553.0" stroke="#676767" stroke-width="0.9"/>
<line x1="99.2" y1="559.1" x2="101" y2="559.1" stroke="#676767" stroke-width="0.9"/>
<line x1="99.2" y1="565.2" x2="101" y2="565.2" stroke="#676767" stroke-width="0.9"/>
<line x1="98" y1="571.3" x2="101" y2="571.3" stroke="#676767" stroke-width="0.9"/>
<line x1="99.2" y1="577.4" x2="101" y2="577.4" stroke="#676767" stroke-width="0.9"/>
<line x1="99.2" y1="583.5" x2="101" y2="583.5" stroke="#676767" stroke-width="0.9"/>
<line x1="99.2" y1="589.6" x2="101" y2="589.6" stroke="#676767" stroke-width="0.9"/>
<line x1="85" y1="595.7" x2="101" y2="595.7" stroke="#5d5d5d" stroke-width="1"/>
<line x1="99.2" y1="601.8" x2="101" y2="601.8" stroke="#676767" stroke-width="0.9"/>
<line x1="99.2" y1="607.9" x2="101" y2="607.9" stroke="#676767" stroke-width="0.9"/>
<line x1="99.2" y1="614.0" x2="101" y2="614.0" stroke="#676767" stroke-width="0.9"/>
<line x1="98" y1="620.1" x2="101" y2="620.1" stroke="#676767" stroke-width="0.9"/>
<line x1="99.2" y1="626.2" x2="101" y2="626.2" stroke="#676767" stroke-width="0.9"/>
<line x1="99.2" y1="632.3" x2="101" y2="632.3" stroke="#676767" stroke-width="0.9"/>
<line x1="99.2" y1="638.4" x2="101" y2="638.4" stroke="#676767" stroke-width="0.9"/>
<line x1="85" y1="644.5" x2="101" y2="644.5" stroke="#5d5d5d" stroke-width="1"/>
<line x1="99.2" y1="650.5" x2="101" y2="650.5" stroke="#676767" stroke-width="0.9"/>
<line x1="99.2" y1="656.6" x2="101" y2="656.6" stroke="#676767" stroke-width="0.9"/>
<line x1="99.2" y1="662.7" x2="101" y2="662.7" stroke="#676767" stroke-width="0.9"/>
<line x1="98" y1="668.8" x2="101" y2="668.8" stroke="#676767" stroke-width="0.9"/>
<line x1="99.2" y1="674.9" x2="101" y2="674.9" stroke="#676767" stroke-width="0.9"/>
<line x1="99.2" y1="681.0" x2="101" y2="681.0" stroke="#676767" stroke-width="0.9"/>
<line x1="99.2" y1="687.1" x2="101" y2="687.1" stroke="#676767" stroke-width="0.9"/>
<line x1="85" y1="693.2" x2="101" y2="693.2" stroke="#5d5d5d" stroke-width="1"/>
<line x1="99.2" y1="699.3" x2="101" y2="699.3" stroke="#676767" stroke-width="0.9"/>
<line x1="99.2" y1="705.4" x2="101" y2="705.4" stroke="#676767" stroke-width="0.9"/>
<line x1="99.2" y1="711.5" x2="101" y2="711.5" stroke="#676767" stroke-width="0.9"/>
<line x1="98" y1="717.6" x2="101" y2="717.6" stroke="#676767" stroke-width="0.9"/>
<line x1="99.2" y1="723.7" x2="101" y2="723.7" stroke="#676767" stroke-width="0.9"/>
<line x1="99.2" y1="729.8" x2="101" y2="729.8" stroke="#676767" stroke-width="0.9"/>
<line x1="99.2" y1="735.9" x2="101" y2="735.9" stroke="#676767" stroke-width="0.9"/>
<line x1="85" y1="742.0" x2="101" y2="742.0" stroke="#5d5d5d" stroke-width="1"/>
<line x1="99.2" y1="748.0" x2="101" y2="748.0" stroke="#676767" stroke-width="0.9"/>
<line x1="99.2" y1="754.1" x2="101" y2="754.1" stroke="#676767" stroke-width="0.9"/>
<line x1="99.2" y1="760.2" x2="101" y2="760.2" stroke="#676767" stroke-width="0.9"/>
<line x1="98" y1="766.3" x2="101" y2="766.3" stroke="#676767" stroke-width="0.9"/>
<line x1="99.2" y1="772.4" x2="101" y2="772.4" stroke="#676767" stroke-width="0.9"/>
<line x1="99.2" y1="778.5" x2="101" y2="778.5" stroke="#676767" stroke-width="0.9"/>
<line x1="99.2" y1="784.6" x2="101" y2="784.6" stroke="#676767" stroke-width="0.9"/>
<line x1="85" y1="790.7" x2="101" y2="790.7" stroke="#5d5d5d" stroke-width="1"/>
<line x1="99.2" y1="796.8" x2="101" y2="796.8" stroke="#676767" stroke-width="0.9"/>
<line x1="99.2" y1="802.9" x2="101" y2="802.9" stroke="#676767" stroke-width="0.9"/>
<line x1="99.2" y1="809.0" x2="101" y2="809.0" stroke="#676767" stroke-width="0.9"/>
<line x1="98" y1="815.1" x2="101" y2="815.1" stroke="#676767" stroke-width="0.9"/>
<line x1="99.2" y1="821.2" x2="101" y2="821.2" stroke="#676767" stroke-width="0.9"/>
<line x1="99.2" y1="827.3" x2="101" y2="827.3" stroke="#676767" stroke-width="0.9"/>
<line x1="99.2" y1="833.4" x2="101" y2="833.4" stroke="#676767" stroke-width="0.9"/>
<line x1="85" y1="839.5" x2="101" y2="839.5" stroke="#5d5d5d" stroke-width="1"/>
<line x1="99.2" y1="845.5" x2="101" y2="845.5" stroke="#676767" stroke-width="0.9"/>
<line x1="99.2" y1="851.6" x2="101" y2="851.6" stroke="#676767" stroke-width="0.9"/>
<line x1="99.2" y1="857.7" x2="101" y2="857.7" stroke="#676767" stroke-width="0.9"/>
<line x1="98" y1="863.8" x2="101" y2="863.8" stroke="#676767" stroke-width="0.9"/>
<line x1="99.2" y1="869.9" x2="101" y2="869.9" stroke="#676767" stroke-width="0.9"/>
<line x1="99.2" y1="876.0" x2="101" y2="876.0" stroke="#676767" stroke-width="0.9"/>
<line x1="99.2" y1="882.1" x2="101" y2="882.1" stroke="#676767" stroke-width="0.9"/>
<line x1="85" y1="888.2" x2="101" y2="888.2" stroke="#5d5d5d" stroke-width="1"/>
<line x1="99.2" y1="894.3" x2="101" y2="894.3" stroke="#676767" stroke-width="0.9"/>
<line x1="99.2" y1="900.4" x2="101" y2="900.4" stroke="#676767" stroke-width="0.9"/>
<line x1="99.2" y1="906.5" x2="101" y2="906.5" stroke="#676767" stroke-width="0.9"/>
<line x1="98" y1="912.6" x2="101" y2="912.6" stroke="#676767" stroke-width="0.9"/>
<line x1="99.2" y1="918.7" x2="101" y2="918.7" stroke="#676767" stroke-width="0.9"/>
<g fill="#b4b4b4" font-family="Liberation Sans" font-size="9.6px"><text x="120.4" y="204.9">0</text><text x="169.1" y="204.9">200</text><text x="217.9" y="204.9">400</text><text x="266.6" y="204.9">600</text><text x="315.4" y="204.9">800</text><text x="364.1" y="204.9">1000</text><text x="412.9" y="204.9">1200</text><text x="461.6" y="204.9">1400</text><text x="510.4" y="204.9">1600</text><text x="559.2" y="204.9">1800</text><text x="607.9" y="204.9">2000</text><text x="656.7" y="204.9">2200</text><text x="705.4" y="204.9">2400</text><text x="754.2" y="204.9">2600</text><text x="802.9" y="204.9">2800</text><text x="851.7" y="204.9">3000</text><text x="900.4" y="204.9">3200</text><text x="949.2" y="204.9">3400</text><text x="997.9" y="204.9">3600</text><text x="1046.7" y="204.9">3800</text><text x="90" y="214.7">4</text><text x="90" y="222.3">0</text><text x="90" y="229.9">0</text><text x="90" y="263.4">2</text><text x="90" y="271.1">0</text><text x="90" y="278.6">0</text><text x="90" y="312.2">0</text><text x="90" y="360.9">2</text><text x="90" y="368.6">0</text><text x="90" y="376.1">0</text><text x="90" y="409.7">4</text><text x="90" y="417.3">0</text><text x="90" y="424.9">0</text><text x="90" y="458.4">6</text><text x="90" y="466.1">0</text><text x="90" y="473.6">0</text><text x="90" y="507.2">8</text><text x="90" y="514.8">0</text><text x="90" y="522.4">0</text><text x="90" y="556.0">1</text><text x="90" y="563.6">0</text><text x="90" y="571.2">0</text><text x="90" y="578.8">0</text><text x="90" y="604.7">1</text><text x="90" y="612.3">2</text><text x="90" y="619.9">0</text><text x="90" y="627.5">0</text><text x="90" y="653.5">1</text><text x="90" y="661.1">4</text><text x="90" y="668.7">0</text><text x="90" y="676.2">0</text><text x="90" y="702.2">1</text><text x="90" y="709.8">6</text><text x="90" y="717.4">0</text><text x="90" y="725.0">0</text><text x="90" y="751.0">1</text><text x="90" y="758.6">8</text><text x="90" y="766.2">0</text><text x="90" y="773.8">0</text><text x="90" y="799.7">2</text><text x="90" y="807.3">0</text><text x="90" y="814.9">0</text><text x="90" y="822.5">0</text><text x="90" y="848.5">2</text><text x="90" y="856.1">2</text><text x="90" y="863.7">0</text><text x="90" y="871.2">0</text><text x="90" y="897.2">2</text><text x="90" y="904.8">4</text><text x="90" y="912.4">0</text><text x="90" y="920.0">0</text></g>
<rect x="85" y="192" width="16" height="17" fill="#4a4a4a"/>
<path d="M1075 203 L1079 199 L1083 203" fill="none" stroke="#cfcfcf" stroke-width="1.1"/>
<rect x="1073" y="418" width="11" height="282" rx="1" fill="#5f5f5f"/>
<path d="M1075 912 L1079 916 L1083 912" fill="none" stroke="#cfcfcf" stroke-width="1.1"/>
</svg>
<div class="a" style="left:85px;top:923px;width:1003px;height:17px;background:#474747"></div>
<div class="a" style="left:131px;top:923px;width:179px;height:17px;background:#535353"></div>
<div class="a" style="left:97px;top:926px;font-size:10px;color:#e8e8e8">50%</div>
<div class="a" style="left:157px;top:926px;font-size:10px;color:#dcdcdc">3840 px x 2160 px (72 ppi)</div>
<svg class="a" style="left:85px;top:923px" width="1003" height="17" viewBox="85 923 1003 17">
<path d="M301 928 L304 931.5 L301 935" fill="none" stroke="#dcdcdc" stroke-width="1.1"/>
<path d="M322 928.5 L319.5 931.5 L322 934.5" fill="none" stroke="#bdbdbd" stroke-width="1"/>
<rect x="559" y="926" width="262" height="11" rx="1" fill="#676767"/>
<path d="M1058.5 928.5 L1061 931.5 L1058.5 934.5" fill="none" stroke="#bdbdbd" stroke-width="1"/>
<rect x="1070" y="923" width="18" height="17" fill="#424242"/>
</svg>
<!-- right panel -->
<div class="a" style="left:1085px;top:164px;width:3px;height:776px;background:#3f3f3f;"></div>
<div class="a" style="left:1088px;top:164px;width:367px;height:11px;background:#424242;"></div>
<div class="a" style="left:1125px;top:175px;width:3px;height:765px;background:#424242;"></div>
<div class="a" style="left:1088px;top:175px;width:37px;height:765px;background:#535353;"></div>
<div class="a" style="left:1088px;top:242px;width:37px;height:2px;background:#424242;"></div>
<div class="a" style="left:1088px;top:282px;width:37px;height:2px;background:#424242;"></div>


<div class="a" style="left:1128px;top:175px;width:327px;height:220px;background:#535353;"></div>
<div class="a" style="left:1128px;top:176px;width:327px;height:27px;background:#474747;"></div>
<div class="a" style="left:1128px;top:176px;width:60px;height:27px;background:#535353;"></div>
<div class="a" style="left:1188px;top:176px;width:1px;height:27px;background:#3e3e3e;"></div>
<div class="a" style="left:1251px;top:176px;width:1px;height:27px;background:#3e3e3e;"></div>
<div class="a" style="left:1295px;top:176px;width:1px;height:27px;background:#3e3e3e;"></div>
<div class="a" style="left:1346px;top:176px;width:1px;height:27px;background:#3e3e3e;"></div>
<div class="a" style="left:1136px;top:183px;font-size:10px;color:#f0f0f0;white-space:nowrap;font-weight:bold">Character</div>
<div class="a" style="left:1197px;top:183px;font-size:10px;color:#b9b9b9;white-space:nowrap;font-weight:bold">Paragraph</div>
<div class="a" style="left:1260px;top:183px;font-size:10px;color:#b9b9b9;white-space:nowrap;font-weight:bold">Styles</div>
<div class="a" style="left:1305px;top:183px;font-size:10px;color:#b9b9b9;white-space:nowrap;font-weight:bold">Actions</div>
<div class="a" style="left:1132px;top:217px;width:117px;height:16px;background:#474747;border:1px solid #5c5c5c;border-radius:2px"></div>
<div class="a" style="left:1233px;top:218px;width:1px;height:14px;background:#5c5c5c"></div>
<div class="a" style="left:1136px;top:219px;font-size:10px;color:#dcdcdc;white-space:nowrap;">Comfortaa</div>
<div class="a" style="left:1261px;top:217px;width:71px;height:16px;background:#474747;border:1px solid #5c5c5c;border-radius:2px"></div>
<div class="a" style="left:1317px;top:218px;width:1px;height:14px;background:#5c5c5c"></div>
<div class="a" style="left:1265px;top:219px;font-size:10px;color:#dcdcdc;white-space:nowrap;">Regular</div>
<div class="a" style="left:1153px;top:241px;width:72px;height:15px;background:#474747;border:1px solid #5c5c5c;border-radius:2px"></div>
<div class="a" style="left:1209px;top:242px;width:1px;height:13px;background:#5c5c5c"></div>
<div class="a" style="left:1157px;top:243px;font-size:10px;color:#dcdcdc;white-space:nowrap;">30 px</div>
<div class="a" style="left:1263px;top:241px;width:69px;height:15px;background:#474747;border:1px solid #5c5c5c;border-radius:2px"></div>
<div class="a" style="left:1317px;top:242px;width:1px;height:13px;background:#5c5c5c"></div>
<div class="a" style="left:1267px;top:243px;font-size:10px;color:#dcdcdc;white-space:nowrap;">60 px</div>
<div class="a" style="left:1153px;top:260px;width:72px;height:15px;background:#474747;border:1px solid #5c5c5c;border-radius:2px"></div>
<div class="a" style="left:1209px;top:261px;width:1px;height:13px;background:#5c5c5c"></div>
<div class="a" style="left:1157px;top:262px;font-size:10px;color:#dcdcdc;white-space:nowrap;">Metrics</div>
<div class="a" style="left:1263px;top:260px;width:69px;height:15px;background:#474747;border:1px solid #5c5c5c;border-radius:2px"></div>
<div class="a" style="left:1317px;top:261px;width:1px;height:13px;background:#5c5c5c"></div>
<div class="a" style="left:1267px;top:262px;font-size:10px;color:#dcdcdc;white-space:nowrap;">25</div>
<div class="a" style="left:1153px;top:280px;width:52px;height:15px;background:#474747;border:1px solid #5c5c5c;border-radius:2px"></div>
<div class="a" style="left:1157px;top:282px;font-size:10px;color:#dcdcdc;white-space:nowrap;">90%</div>
<div class="a" style="left:1280px;top:280px;width:52px;height:15px;background:#474747;border:1px solid #5c5c5c;border-radius:2px"></div>
<div class="a" style="left:1284px;top:282px;font-size:10px;color:#dcdcdc;white-space:nowrap;">100%</div>
<div class="a" style="left:1153px;top:300px;width:52px;height:16px;background:#474747;border:1px solid #5c5c5c;border-radius:2px"></div>
<div class="a" style="left:1157px;top:302px;font-size:10px;color:#dcdcdc;white-space:nowrap;">0 px</div>
<div class="a" style="left:1246px;top:302px;font-size:10px;color:#cfcfcf;white-space:nowrap;">Color:</div>
<div class="a" style="left:1280px;top:300px;width:52px;height:16px;background:#fbe9c4;border:1px solid #444"></div>
<div class="a" style="left:1132px;top:376px;width:111px;height:15px;background:#474747;border:1px solid #5c5c5c;border-radius:2px"></div>
<div class="a" style="left:1140px;top:378px;font-size:10px;color:#dcdcdc;white-space:nowrap;">English: USA</div>
<div class="a" style="left:1268px;top:376px;width:64px;height:15px;background:#474747;border:1px solid #5c5c5c;border-radius:2px"></div>
<div class="a" style="left:1275px;top:378px;font-size:10px;color:#dcdcdc;white-space:nowrap;">Sharp</div>
<div class="a" style="left:1139px;top:348px;width:22px;height:21px;background:#383838;border-radius:2px"></div>
<div class="a" style="left:1128px;top:395px;width:327px;height:3px;background:#424242;"></div>
<div class="a" style="left:1128px;top:398px;width:327px;height:542px;background:#535353;"></div>
<div class="a" style="left:1128px;top:398px;width:327px;height:27px;background:#474747;"></div>
<div class="a" style="left:1128px;top:398px;width:46px;height:27px;background:#535353;"></div>
<div class="a" style="left:1174px;top:398px;width:1px;height:27px;background:#3e3e3e;"></div>
<div class="a" style="left:1247px;top:398px;width:1px;height:27px;background:#3e3e3e;"></div>
<div class="a" style="left:1299px;top:398px;width:1px;height:27px;background:#3e3e3e;"></div>
<div class="a" style="left:1342px;top:398px;width:1px;height:27px;background:#3e3e3e;"></div>
<div class="a" style="left:1407px;top:398px;width:1px;height:27px;background:#3e3e3e;"></div>
<div class="a" style="left:1136px;top:405px;font-size:10px;color:#f0f0f0;white-space:nowrap;font-weight:bold">Layers</div>
<div class="a" style="left:1182px;top:405px;font-size:10px;color:#b9b9b9;white-space:nowrap;font-weight:bold">Adjustments</div>
<div class="a" style="left:1257px;top:405px;font-size:10px;color:#b9b9b9;white-space:nowrap;font-weight:bold">History</div>
<div class="a" style="left:1309px;top:405px;font-size:10px;color:#b9b9b9;white-space:nowrap;font-weight:bold">Paths</div>
<div class="a" style="left:1351px;top:405px;font-size:10px;color:#b9b9b9;white-space:nowrap;font-weight:bold">Properties</div>
<div class="a" style="left:1132px;top:435px;width:84px;height:16px;background:#424242;border:1px solid #4e4e4e;border-radius:2px"></div>
<div class="a" style="left:1151px;top:437px;font-size:10.5px;color:#e6e6e6;white-space:nowrap;">Kind</div>
<div class="a" style="left:1128px;top:456px;width:327px;height:1px;background:#474747;"></div>
<div class="a" style="left:1132px;top:463px;width:124px;height:15px;background:#4e4e4e;border:1px solid #5a5a5a;border-radius:2px"></div>
<div class="a" style="left:1136px;top:465px;font-size:10px;color:#7e7e7e;white-space:nowrap;">Normal</div>
<div class="a" style="left:1263px;top:465px;font-size:10px;color:#7e7e7e;white-space:nowrap;">Opacity:</div>
<div class="a" style="left:1303px;top:463px;width:49px;height:15px;background:#4b4b4b;border:1px solid #5a5a5a;border-radius:2px"></div>
<div class="a" style="left:1338px;top:464px;width:1px;height:13px;background:#5a5a5a"></div>
<div class="a" style="left:1306px;top:465px;font-size:10px;color:#7e7e7e;white-space:nowrap;">100%</div>
<div class="a" style="left:1128px;top:483px;width:327px;height:1px;background:#474747;"></div>
<div class="a" style="left:1134px;top:492px;font-size:10px;color:#8a8a8a;white-space:nowrap;">Lock:</div>
<div class="a" style="left:1284px;top:492px;font-size:10px;color:#8a8a8a;white-space:nowrap;">Fill:</div>
<div class="a" style="left:1303px;top:490px;width:49px;height:15px;background:#4b4b4b;border:1px solid #5a5a5a;border-radius:2px"></div>
<div class="a" style="left:1338px;top:491px;width:1px;height:13px;background:#5a5a5a"></div>
<div class="a" style="left:1306px;top:492px;font-size:10px;color:#7e7e7e;white-space:nowrap;">100%</div>
<div class="a" style="left:1128px;top:511px;width:327px;height:1px;background:#474747;"></div>
<div class="a" style="left:1128px;top:512px;width:313px;height:400px;background:#4c4c4c;"></div>
<div class="a" style="left:1128px;top:513px;width:312px;height:24px;background:#535353;"></div>
<div class="a" style="left:1157px;top:513px;width:1px;height:24px;background:#4a4a4a;"></div>
<div class="a" style="left:1198px;top:519px;font-size:10.2px;color:#e6e6e6;white-space:nowrap;">YouTube places</div>
<div class="a" style="left:1128px;top:538px;width:312px;height:24px;background:#535353;"></div>
<div class="a" style="left:1157px;top:538px;width:1px;height:24px;background:#4a4a4a;"></div>
<div class="a" style="left:1198px;top:544px;font-size:10.2px;color:#e6e6e6;white-space:nowrap;">Social Media</div>
<div class="a" style="left:1128px;top:562px;width:302px;height:53px;background:#535353;"></div>
<div class="a" style="left:1157px;top:562px;width:1px;height:53px;background:#4a4a4a;"></div>
<div class="a" style="left:1248px;top:583px;font-size:10.2px;color:#e6e6e6;white-space:nowrap;">andrew - skoch</div>
<div class="a" style="left:1414px;top:580px;font-size:13px;color:#c8c8c8;white-space:nowrap;font-family:Liberation Serif"><i>fx</i></div>
<div class="a" style="left:1128px;top:616px;width:302px;height:53px;background:#535353;"></div>
<div class="a" style="left:1157px;top:616px;width:1px;height:53px;background:#4a4a4a;"></div>
<div class="a" style="left:1248px;top:637px;font-size:10.2px;color:#e6e6e6;white-space:nowrap;">Thank you!</div>
<div class="a" style="left:1414px;top:634px;font-size:13px;color:#c8c8c8;white-space:nowrap;font-family:Liberation Serif"><i>fx</i></div>
<div class="a" style="left:1128px;top:670px;width:302px;height:53px;background:#535353;"></div>
<div class="a" style="left:1157px;top:670px;width:1px;height:53px;background:#4a4a4a;"></div>
<div class="a" style="left:1248px;top:691px;font-size:10.2px;color:#e6e6e6;white-space:nowrap;">Thank you!</div>
<div class="a" style="left:1414px;top:688px;font-size:13px;color:#c8c8c8;white-space:nowrap;font-family:Liberation Serif"><i>fx</i></div>
<div class="a" style="left:1128px;top:724px;width:302px;height:52px;background:#535353;"></div>
<div class="a" style="left:1157px;top:724px;width:1px;height:52px;background:#4a4a4a;"></div>
<div class="a" style="left:1248px;top:745px;font-size:10.2px;color:#e6e6e6;white-space:nowrap;">Thank you!</div>
<div class="a" style="left:1414px;top:742px;font-size:13px;color:#c8c8c8;white-space:nowrap;font-family:Liberation Serif"><i>fx</i></div>
<div class="a" style="left:1128px;top:777px;width:302px;height:53px;background:#535353;"></div>
<div class="a" style="left:1157px;top:777px;width:1px;height:53px;background:#4a4a4a;"></div>
<div class="a" style="left:1248px;top:798px;font-size:10.2px;color:#e6e6e6;white-space:nowrap;">New video:</div>
<div class="a" style="left:1414px;top:795px;font-size:13px;color:#c8c8c8;white-space:nowrap;font-family:Liberation Serif"><i>fx</i></div>
<div class="a" style="left:1128px;top:831px;width:302px;height:52px;background:#535353;"></div>
<div class="a" style="left:1157px;top:831px;width:1px;height:52px;background:#4a4a4a;"></div>
<div class="a" style="left:1248px;top:852px;font-size:10.2px;color:#e6e6e6;white-space:nowrap;">Related:</div>
<div class="a" style="left:1414px;top:849px;font-size:13px;color:#c8c8c8;white-space:nowrap;font-family:Liberation Serif"><i>fx</i></div>
<div class="a" style="left:1128px;top:884px;width:312px;height:24px;background:#535353;"></div>
<div class="a" style="left:1157px;top:884px;width:1px;height:24px;background:#4a4a4a;"></div>
<div class="a" style="left:1198px;top:890px;font-size:10.2px;color:#e6e6e6;white-space:nowrap;">Decor</div>
<div class="a" style="left:1128px;top:909px;width:312px;height:8px;background:#535353;"></div>
<div class="a" style="left:1157px;top:909px;width:1px;height:8px;background:#4a4a4a;"></div>
<div class="a" style="left:1441px;top:512px;width:12px;height:400px;background:#4a4a4a;"></div>
<div class="a" style="left:1443px;top:530px;width:9px;height:256px;background:#5f5f5f;border-radius:1px"></div>
<div class="a" style="left:1128px;top:912px;width:327px;height:28px;background:#535353;border-top:1px solid #474747"></div>

<svg class="a" style="left:118px;top:303px" width="936" height="527" viewBox="118 303 936 527">
<defs>
<filter id="fx" filterUnits="userSpaceOnUse" x="100" y="290" width="970" height="560" color-interpolation-filters="sRGB">
 <feOffset in="SourceAlpha" dx="-1.5" dy="-1.5" result="hl"/>
 <feMerge result="u"><feMergeNode in="hl"/><feMergeNode in="SourceAlpha"/></feMerge>
 <feMorphology in="u" operator="dilate" radius="0.9" result="ol"/>
 <feOffset in="ol" dx="2" dy="2" result="sh"/>
 <feFlood flood-color="#ffffff" result="wf"/><feComposite in="wf" in2="hl" operator="in" result="hlw"/>
 <feMerge><feMergeNode in="sh"/><feMergeNode in="ol"/><feMergeNode in="hlw"/><feMergeNode in="SourceGraphic"/></feMerge>
</filter>
<filter id="fxsun" filterUnits="userSpaceOnUse" x="100" y="290" width="970" height="560" color-interpolation-filters="sRGB">
 <feOffset in="SourceAlpha" dx="-2" dy="-1" result="hl"/>
 <feMerge result="u"><feMergeNode in="hl"/><feMergeNode in="SourceAlpha"/></feMerge>
 <feMorphology in="u" operator="dilate" radius="1" result="ol"/>
 <feOffset in="ol" dx="2" dy="2" result="sh"/>
 <feFlood flood-color="#ffffff" result="wf"/><feComposite in="wf" in2="hl" operator="in" result="hlw"/>
 <feMerge><feMergeNode in="sh"/><feMergeNode in="ol"/><feMergeNode in="hlw"/><feMergeNode in="SourceGraphic"/></feMerge>
</filter>
<filter id="fxst" filterUnits="userSpaceOnUse" x="100" y="290" width="970" height="560" color-interpolation-filters="sRGB">
 <feMorphology in="SourceAlpha" operator="dilate" radius="1.3" result="ol"/>
 <feOffset in="ol" dx="2" dy="2" result="sh"/>
 <feMerge><feMergeNode in="sh"/><feMergeNode in="ol"/><feMergeNode in="SourceGraphic"/></feMerge>
</filter>
<filter id="fxt" filterUnits="userSpaceOnUse" x="100" y="290" width="970" height="560" color-interpolation-filters="sRGB">
 <feMorphology in="SourceAlpha" operator="dilate" radius="1.3" result="ol"/>
 <feOffset in="ol" dx="2" dy="2" result="sh"/>
 <feMerge><feMergeNode in="sh"/><feMergeNode in="ol"/><feMergeNode in="SourceGraphic"/></feMerge>
</filter>
<filter id="fxs" filterUnits="userSpaceOnUse" x="100" y="290" width="970" height="560" color-interpolation-filters="sRGB">
 <feMorphology in="SourceAlpha" operator="dilate" radius="1.0" result="ol"/>
 <feOffset in="ol" dx="2" dy="2" result="sh"/>
 <feMerge><feMergeNode in="sh"/><feMergeNode in="ol"/><feMergeNode in="SourceGraphic"/></feMerge>
</filter>
<filter id="noise" filterUnits="userSpaceOnUse" x="118" y="303" width="936" height="527">
 <feTurbulence type="fractalNoise" baseFrequency="0.9" numOctaves="2" seed="3" result="t"/>
 <feColorMatrix in="t" type="matrix" values="0 0 0 0 1  0 0 0 0 1  0 0 0 0 1  0.5 0 0 0 -0.25" result="w"/>
 <feColorMatrix in="t" type="matrix" values="0 0 0 0 0.3  0 0 0 0 0.2  0 0 0 0 0.2  -0.5 0 0 0 0.25" result="b"/>
 <feMerge><feMergeNode in="w"/><feMergeNode in="b"/></feMerge>
</filter>
<radialGradient id="ig" cx="0.25" cy="1.05" r="1.2">
<stop offset="0" stop-color="#fdd36a"/><stop offset="0.25" stop-color="#f5883a"/><stop offset="0.55" stop-color="#d6307a"/><stop offset="0.85" stop-color="#8a3ab9"/><stop offset="1" stop-color="#5c4ad0"/>
</radialGradient>
</defs>
<rect x="118" y="303" width="936" height="527" fill="#c18a8c"/>
<rect x="118" y="303" width="936" height="527" filter="url(#noise)" opacity="0.7"/>
<g filter="url(#fx)" fill="none" stroke-linecap="round">
<path d="M172.5 369 C165 355 170 343 183 344 C198 345 200 358 195 375 C188 393 195 404 205 402 C213 400 217 388 225 389 C230 390 234 396 236 401" stroke="#8dd0c6" stroke-width="5"/>
<path d="M309 458 C325 447 338 437 347 438 C356 439 350 457 356 459 C363 461 372 447 384 440 C395 433 405 430 416 429" stroke="#e9c97c" stroke-width="6"/>
<path d="M134.5 777 C140 790 150 797 160 794 C170 791 178 786 186 791 C195 797 198 815 198 832" stroke="#e9c97c" stroke-width="4.5"/>
<path d="M1044 739 C1035 741 1028 746 1030 758 C1032 770 1038 783 1020 790 C1005 795 985 786 972 792 C960 798 958 814 972 817 C976 818 980 817 983 816" stroke="#d36b5a" stroke-width="4.5"/>
<path d="M842 486 C844 490 847 494 851 494 C855 494 855 500 859 502 C862 503 862 506 864 507.5 M862 485.5 C862 489 866 491 866.5 494 C867 498 869 499 871 500 C873 502 872 504 874.5 505.5 M879 487.5 C879 491 882 493 881.5 496 C881 499 884 501 884 503 C884 506 885 507 886.5 509" stroke="#8dd0c6" stroke-width="3.8"/>
<rect x="169.7" y="568.6" width="326.4" height="194.4" rx="11" stroke="#d66c58" stroke-width="3.4"/>
<rect x="677.8" y="568.6" width="325.2" height="194.4" rx="11" stroke="#8dd0c6" stroke-width="3.4"/>
</g>
<g filter="url(#fx)">
<circle cx="305" cy="398.4" r="5" fill="#d66c58"/><circle cx="168.6" cy="449" r="5" fill="#d66c58"/><circle cx="241" cy="470.4" r="5" fill="#e9c97c"/>
<circle cx="731" cy="353.3" r="5" fill="#8dd0c6"/><circle cx="1015" cy="344.5" r="5" fill="#d66c58"/>
<circle cx="305" cy="804.5" r="4.8" fill="#8dd0c6"/><circle cx="416.2" cy="795.3" r="4.8" fill="#d66c58"/>
<circle cx="762.4" cy="789.3" r="4.8" fill="#e9c97c"/><circle cx="865.9" cy="799" r="4.8" fill="#8dd0c6"/>
</g>
<defs><path id="sunp" d="M571.51 365.05 L572.20 364.90 L572.86 364.71 L573.51 364.47 L574.12 364.19 L574.72 363.87 L575.29 363.49 L575.84 363.07 L576.37 362.60 L576.88 362.09 L577.38 361.52 L577.85 360.91 L578.31 360.25 L578.76 359.54 L579.19 358.77 L579.60 357.96 L580.00 357.10 L580.39 356.19 L580.76 355.22 L581.12 354.21 L581.47 353.14 L581.81 352.03 L582.13 350.86 L582.43 349.64 L582.73 348.36 L583.01 347.04 L583.28 345.66 L583.54 344.23 L583.78 342.75 L584.01 341.21 L584.22 339.62 L584.43 337.98 L584.62 336.28 L584.79 334.54 L584.95 332.73 L585.10 330.88 L585.23 328.97 L585.35 327.01 L585.45 324.99 L585.54 322.92 L585.60 320.80 L585.66 322.92 L585.75 324.99 L585.85 327.01 L585.97 328.97 L586.10 330.88 L586.25 332.73 L586.41 334.54 L586.58 336.28 L586.77 337.98 L586.98 339.62 L587.19 341.21 L587.42 342.75 L587.66 344.23 L587.92 345.66 L588.19 347.04 L588.47 348.36 L588.77 349.64 L589.07 350.86 L589.39 352.03 L589.73 353.14 L590.08 354.21 L590.44 355.22 L590.81 356.19 L591.20 357.10 L591.60 357.96 L592.01 358.77 L592.44 359.54 L592.89 360.25 L593.35 360.91 L593.82 361.52 L594.32 362.09 L594.83 362.60 L595.36 363.07 L595.91 363.49 L596.48 363.87 L597.08 364.19 L597.69 364.47 L598.34 364.71 L599.00 364.90 L599.69 365.05 L595.34 364.40 L596.05 364.46 L596.74 364.47 L597.42 364.43 L598.10 364.35 L598.76 364.21 L599.42 364.02 L600.07 363.78 L600.71 363.49 L601.35 363.15 L601.99 362.75 L602.63 362.31 L603.27 361.81 L603.90 361.26 L604.54 360.66 L605.17 360.01 L605.81 359.30 L606.45 358.55 L607.09 357.73 L607.73 356.87 L608.38 355.95 L609.02 354.99 L609.68 353.96 L610.33 352.89 L610.99 351.76 L611.65 350.57 L612.31 349.34 L612.98 348.04 L613.65 346.70 L614.32 345.30 L614.99 343.84 L615.67 342.34 L616.35 340.77 L617.03 339.15 L617.72 337.48 L618.41 335.75 L619.09 333.96 L619.79 332.12 L620.48 330.23 L621.17 328.28 L621.85 326.26 L621.29 328.31 L620.76 330.31 L620.26 332.27 L619.80 334.18 L619.36 336.04 L618.96 337.86 L618.58 339.63 L618.23 341.35 L617.91 343.03 L617.62 344.66 L617.36 346.24 L617.13 347.77 L616.92 349.26 L616.74 350.70 L616.60 352.10 L616.47 353.45 L616.38 354.75 L616.32 356.01 L616.28 357.22 L616.27 358.39 L616.28 359.51 L616.33 360.58 L616.40 361.62 L616.50 362.60 L616.63 363.54 L616.79 364.44 L616.97 365.30 L617.19 366.11 L617.44 366.88 L617.71 367.60 L618.02 368.29 L618.35 368.93 L618.72 369.54 L619.13 370.10 L619.56 370.63 L620.03 371.11 L620.54 371.56 L621.08 371.98 L621.66 372.36 L622.28 372.70 L618.32 370.80 L618.97 371.06 L619.63 371.28 L620.29 371.45 L620.96 371.56 L621.64 371.62 L622.32 371.64 L623.01 371.60 L623.71 371.51 L624.43 371.37 L625.15 371.19 L625.89 370.95 L626.65 370.66 L627.42 370.32 L628.20 369.94 L629.00 369.50 L629.82 369.01 L630.65 368.48 L631.50 367.89 L632.37 367.26 L633.26 366.57 L634.16 365.84 L635.09 365.05 L636.03 364.21 L636.99 363.33 L637.97 362.39 L638.97 361.41 L639.98 360.37 L641.02 359.28 L642.08 358.14 L643.15 356.95 L644.24 355.71 L645.35 354.41 L646.48 353.07 L647.63 351.67 L648.80 350.22 L649.98 348.72 L651.18 347.16 L652.40 345.55 L653.64 343.89 L654.89 342.17 L653.74 343.96 L652.65 345.72 L651.60 347.44 L650.59 349.13 L649.62 350.78 L648.70 352.40 L647.82 353.98 L646.98 355.52 L646.18 357.03 L645.42 358.50 L644.71 359.93 L644.03 361.33 L643.40 362.69 L642.80 364.02 L642.25 365.31 L641.73 366.56 L641.26 367.78 L640.83 368.96 L640.43 370.11 L640.08 371.22 L639.77 372.30 L639.49 373.34 L639.26 374.35 L639.06 375.32 L638.91 376.26 L638.79 377.16 L638.72 378.03 L638.69 378.87 L638.69 379.68 L638.74 380.45 L638.83 381.20 L638.97 381.91 L639.14 382.60 L639.36 383.26 L639.62 383.89 L639.93 384.49 L640.28 385.07 L640.67 385.63 L641.12 386.16 L641.61 386.67 L638.38 383.68 L638.93 384.13 L639.49 384.53 L640.08 384.89 L640.68 385.19 L641.31 385.45 L641.96 385.67 L642.63 385.83 L643.33 385.96 L644.05 386.04 L644.80 386.07 L645.58 386.06 L646.38 386.01 L647.22 385.91 L648.08 385.77 L648.97 385.59 L649.90 385.37 L650.85 385.10 L651.84 384.79 L652.85 384.44 L653.90 384.05 L654.99 383.61 L656.10 383.13 L657.25 382.61 L658.43 382.05 L659.64 381.45 L660.88 380.80 L662.16 380.10 L663.47 379.37 L664.82 378.59 L666.19 377.77 L667.60 376.91 L669.05 376.00 L670.52 375.04 L672.03 374.05 L673.57 373.00 L675.15 371.92 L676.76 370.79 L678.40 369.61 L680.07 368.39 L681.77 367.11 L680.14 368.48 L678.58 369.84 L677.07 371.18 L675.61 372.49 L674.20 373.79 L672.84 375.06 L671.53 376.31 L670.27 377.53 L669.06 378.74 L667.91 379.92 L666.80 381.08 L665.74 382.22 L664.73 383.33 L663.78 384.42 L662.87 385.49 L662.01 386.54 L661.19 387.57 L660.43 388.57 L659.72 389.55 L659.05 390.50 L658.43 391.44 L657.87 392.35 L657.35 393.25 L656.87 394.12 L656.45 394.97 L656.07 395.80 L655.75 396.61 L655.47 397.40 L655.24 398.18 L655.05 398.93 L654.92 399.67 L654.84 400.39 L654.80 401.10 L654.82 401.79 L654.88 402.47 L655.00 403.14 L655.16 403.80 L655.37 404.45 L655.64 405.09 L655.96 405.72 L653.76 401.91 L654.15 402.50 L654.57 403.05 L655.02 403.56 L655.51 404.03 L656.03 404.46 L656.59 404.86 L657.18 405.22 L657.81 405.54 L658.48 405.83 L659.19 406.08 L659.93 406.31 L660.72 406.49 L661.54 406.65 L662.41 406.77 L663.31 406.86 L664.26 406.92 L665.25 406.94 L666.29 406.94 L667.36 406.90 L668.48 406.84 L669.64 406.74 L670.85 406.61 L672.10 406.45 L673.39 406.26 L674.73 406.04 L676.11 405.79 L677.53 405.50 L679.00 405.19 L680.52 404.84 L682.07 404.46 L683.68 404.05 L685.32 403.60 L687.02 403.13 L688.75 402.62 L690.53 402.08 L692.36 401.51 L694.23 400.90 L696.14 400.26 L698.10 399.58 L700.10 398.86 L698.14 399.70 L696.25 400.53 L694.41 401.36 L692.63 402.19 L690.90 403.01 L689.22 403.83 L687.61 404.63 L686.04 405.44 L684.53 406.23 L683.08 407.02 L681.68 407.80 L680.33 408.58 L679.04 409.34 L677.80 410.11 L676.62 410.86 L675.49 411.61 L674.41 412.35 L673.39 413.08 L672.42 413.80 L671.50 414.52 L670.63 415.23 L669.82 415.94 L669.06 416.64 L668.35 417.33 L667.69 418.02 L667.09 418.70 L666.54 419.38 L666.04 420.06 L665.59 420.73 L665.19 421.40 L664.85 422.06 L664.56 422.73 L664.31 423.39 L664.12 424.06 L663.99 424.73 L663.90 425.40 L663.86 426.08 L663.87 426.76 L663.94 427.45 L664.05 428.15 L663.08 423.86 L663.27 424.54 L663.52 425.19 L663.80 425.81 L664.13 426.40 L664.50 426.97 L664.91 427.51 L665.37 428.03 L665.88 428.53 L666.43 429.00 L667.03 429.45 L667.68 429.88 L668.37 430.29 L669.12 430.68 L669.91 431.05 L670.75 431.41 L671.64 431.74 L672.58 432.06 L673.57 432.36 L674.61 432.64 L675.69 432.91 L676.83 433.16 L678.02 433.39 L679.26 433.61 L680.56 433.80 L681.90 433.99 L683.29 434.15 L684.74 434.30 L686.23 434.43 L687.78 434.55 L689.38 434.64 L691.04 434.72 L692.74 434.78 L694.50 434.83 L696.31 434.85 L698.17 434.86 L700.08 434.85 L702.05 434.82 L704.06 434.77 L706.13 434.70 L708.26 434.61 L706.14 434.83 L704.09 435.07 L702.08 435.32 L700.14 435.59 L698.24 435.86 L696.40 436.15 L694.62 436.44 L692.89 436.75 L691.21 437.06 L689.59 437.39 L688.02 437.72 L686.51 438.06 L685.05 438.42 L683.64 438.78 L682.29 439.15 L680.98 439.53 L679.74 439.92 L678.54 440.32 L677.40 440.73 L676.31 441.14 L675.27 441.57 L674.29 442.00 L673.36 442.45 L672.48 442.90 L671.65 443.36 L670.87 443.84 L670.14 444.32 L669.46 444.82 L668.84 445.33 L668.26 445.85 L667.74 446.39 L667.26 446.94 L666.83 447.50 L666.45 448.08 L666.12 448.68 L665.84 449.30 L665.61 449.93 L665.42 450.59 L665.28 451.27 L665.18 451.97 L665.51 447.58 L665.50 448.29 L665.54 448.98 L665.63 449.66 L665.76 450.32 L665.95 450.98 L666.19 451.62 L666.48 452.25 L666.82 452.87 L667.20 453.48 L667.64 454.09 L668.14 454.69 L668.68 455.29 L669.27 455.88 L669.92 456.47 L670.62 457.06 L671.37 457.64 L672.17 458.22 L673.03 458.80 L673.94 459.37 L674.90 459.95 L675.92 460.52 L676.99 461.09 L678.11 461.67 L679.28 462.24 L680.51 462.81 L681.80 463.38 L683.13 463.94 L684.53 464.51 L685.97 465.08 L687.47 465.64 L689.03 466.20 L690.64 466.77 L692.30 467.33 L694.03 467.88 L695.80 468.44 L697.63 468.99 L699.52 469.54 L701.46 470.09 L703.46 470.64 L705.52 471.17 L703.43 470.76 L701.40 470.38 L699.41 470.03 L697.47 469.71 L695.58 469.42 L693.74 469.15 L691.94 468.90 L690.20 468.68 L688.51 468.49 L686.86 468.32 L685.26 468.18 L683.71 468.06 L682.21 467.97 L680.76 467.90 L679.36 467.86 L678.01 467.84 L676.70 467.84 L675.44 467.87 L674.23 467.92 L673.06 468.00 L671.95 468.10 L670.88 468.22 L669.86 468.37 L668.88 468.55 L667.95 468.75 L667.07 468.97 L666.23 469.22 L665.44 469.50 L664.69 469.80 L663.98 470.13 L663.32 470.48 L662.71 470.87 L662.13 471.28 L661.60 471.72 L661.11 472.20 L660.66 472.70 L660.25 473.24 L659.87 473.81 L659.54 474.42 L659.24 475.06 L660.85 470.97 L660.63 471.64 L660.46 472.32 L660.34 472.99 L660.28 473.66 L660.27 474.34 L660.31 475.02 L660.39 475.71 L660.53 476.40 L660.72 477.11 L660.97 477.82 L661.26 478.54 L661.60 479.27 L662.00 480.01 L662.44 480.76 L662.94 481.53 L663.48 482.30 L664.08 483.10 L664.73 483.90 L665.42 484.72 L666.17 485.55 L666.98 486.40 L667.83 487.26 L668.73 488.14 L669.69 489.03 L670.69 489.94 L671.75 490.86 L672.86 491.80 L674.03 492.75 L675.24 493.72 L676.51 494.70 L677.83 495.69 L679.20 496.71 L680.63 497.73 L682.11 498.77 L683.64 499.83 L685.23 500.90 L686.87 501.98 L688.56 503.08 L690.31 504.18 L692.12 505.30 L690.25 504.29 L688.42 503.33 L686.62 502.41 L684.86 501.53 L683.14 500.69 L681.46 499.89 L679.82 499.13 L678.22 498.41 L676.66 497.73 L675.13 497.08 L673.65 496.47 L672.20 495.90 L670.80 495.37 L669.43 494.88 L668.10 494.42 L666.81 494.01 L665.56 493.62 L664.35 493.28 L663.18 492.97 L662.05 492.70 L660.95 492.47 L659.89 492.28 L658.87 492.12 L657.89 492.00 L656.94 491.91 L656.03 491.87 L655.15 491.86 L654.32 491.89 L653.51 491.95 L652.74 492.06 L652.01 492.21 L651.30 492.39 L650.63 492.62 L649.99 492.89 L649.38 493.19 L648.80 493.54 L648.25 493.94 L647.73 494.37 L647.23 494.85 L646.75 495.38 L649.49 491.94 L649.09 492.52 L648.73 493.11 L648.42 493.72 L648.16 494.35 L647.95 494.99 L647.78 495.66 L647.67 496.34 L647.59 497.04 L647.57 497.77 L647.59 498.52 L647.66 499.29 L647.77 500.09 L647.93 500.92 L648.13 501.77 L648.38 502.65 L648.67 503.55 L649.01 504.48 L649.39 505.44 L649.82 506.43 L650.29 507.45 L650.80 508.49 L651.36 509.57 L651.97 510.67 L652.62 511.81 L653.31 512.97 L654.05 514.16 L654.84 515.39 L655.67 516.64 L656.55 517.92 L657.47 519.23 L658.44 520.57 L659.45 521.95 L660.51 523.35 L661.62 524.78 L662.77 526.24 L663.97 527.73 L665.22 529.24 L666.52 530.79 L667.86 532.37 L669.26 533.97 L667.77 532.45 L666.30 530.99 L664.85 529.58 L663.43 528.23 L662.04 526.92 L660.67 525.66 L659.33 524.45 L658.01 523.28 L656.72 522.17 L655.45 521.10 L654.21 520.09 L653.00 519.12 L651.81 518.19 L650.65 517.32 L649.52 516.49 L648.41 515.71 L647.33 514.98 L646.27 514.29 L645.24 513.66 L644.24 513.06 L643.26 512.52 L642.30 512.02 L641.37 511.57 L640.47 511.16 L639.59 510.80 L638.73 510.49 L637.90 510.22 L637.09 510.00 L636.30 509.83 L635.53 509.71 L634.79 509.63 L634.06 509.60 L633.35 509.62 L632.66 509.68 L631.99 509.80 L631.33 509.96 L630.69 510.18 L630.06 510.44 L629.44 510.75 L628.83 511.11 L632.47 508.63 L631.91 509.07 L631.39 509.53 L630.91 510.02 L630.48 510.54 L630.09 511.10 L629.74 511.68 L629.42 512.30 L629.15 512.95 L628.91 513.64 L628.71 514.36 L628.54 515.12 L628.42 515.92 L628.32 516.75 L628.27 517.62 L628.25 518.54 L628.26 519.49 L628.31 520.48 L628.39 521.51 L628.50 522.58 L628.65 523.69 L628.84 524.84 L629.06 526.03 L629.31 527.26 L629.60 528.54 L629.92 529.86 L630.27 531.21 L630.66 532.61 L631.09 534.06 L631.55 535.54 L632.04 537.06 L632.57 538.63 L633.14 540.24 L633.74 541.89 L634.37 543.59 L635.05 545.32 L635.75 547.10 L636.50 548.92 L637.28 550.78 L638.10 552.68 L638.97 554.62 L637.99 552.73 L637.02 550.91 L636.05 549.13 L635.09 547.42 L634.14 545.76 L633.21 544.15 L632.28 542.59 L631.36 541.09 L630.46 539.65 L629.56 538.26 L628.68 536.92 L627.80 535.64 L626.94 534.41 L626.09 533.23 L625.25 532.10 L624.42 531.03 L623.60 530.01 L622.80 529.05 L622.00 528.13 L621.21 527.27 L620.44 526.46 L619.68 525.70 L618.92 525.00 L618.18 524.34 L617.44 523.74 L616.72 523.19 L616.00 522.69 L615.29 522.24 L614.59 521.84 L613.89 521.50 L613.20 521.20 L612.51 520.96 L611.83 520.77 L611.15 520.63 L610.48 520.54 L609.80 520.50 L609.12 520.52 L608.44 520.58 L607.76 520.70 L607.07 520.87 L611.27 519.57 L610.61 519.82 L609.98 520.11 L609.38 520.44 L608.81 520.81 L608.28 521.22 L607.77 521.67 L607.29 522.17 L606.83 522.71 L606.40 523.30 L606.00 523.93 L605.61 524.61 L605.26 525.33 L604.92 526.10 L604.61 526.92 L604.32 527.79 L604.05 528.70 L603.81 529.66 L603.58 530.67 L603.38 531.72 L603.19 532.83 L603.03 533.98 L602.89 535.19 L602.77 536.44 L602.66 537.74 L602.58 539.10 L602.52 540.50 L602.48 541.95 L602.46 543.45 L602.46 545.01 L602.49 546.61 L602.53 548.26 L602.60 549.97 L602.68 551.72 L602.79 553.53 L602.93 555.38 L603.08 557.29 L603.25 559.25 L603.45 561.26 L603.68 563.32 L603.93 565.43 L603.55 563.34 L603.16 561.30 L602.76 559.32 L602.35 557.40 L601.93 555.53 L601.51 553.72 L601.09 551.96 L600.65 550.26 L600.21 548.61 L599.77 547.02 L599.32 545.48 L598.86 544.00 L598.40 542.57 L597.93 541.19 L597.46 539.87 L596.98 538.60 L596.50 537.38 L596.02 536.22 L595.53 535.11 L595.03 534.06 L594.53 533.06 L594.02 532.11 L593.51 531.21 L592.99 530.37 L592.46 529.57 L591.93 528.83 L591.39 528.14 L590.85 527.51 L590.29 526.92 L589.73 526.38 L589.16 525.90 L588.57 525.47 L587.98 525.08 L587.37 524.75 L586.75 524.46 L586.11 524.23 L585.46 524.04 L584.79 523.90 L584.11 523.81 L583.40 523.77 L587.80 523.77 L587.09 523.81 L586.41 523.90 L585.74 524.04 L585.09 524.23 L584.45 524.46 L583.83 524.75 L583.22 525.08 L582.63 525.47 L582.04 525.90 L581.47 526.38 L580.91 526.92 L580.35 527.51 L579.81 528.14 L579.27 528.83 L578.74 529.57 L578.21 530.37 L577.69 531.21 L577.18 532.11 L576.67 533.06 L576.17 534.06 L575.67 535.11 L575.18 536.22 L574.70 537.38 L574.22 538.60 L573.74 539.87 L573.27 541.19 L572.80 542.57 L572.34 544.00 L571.88 545.48 L571.43 547.02 L570.99 548.61 L570.55 550.26 L570.11 551.96 L569.69 553.72 L569.27 555.53 L568.85 557.40 L568.44 559.32 L568.04 561.30 L567.65 563.34 L567.27 565.43 L567.52 563.32 L567.75 561.26 L567.95 559.25 L568.12 557.29 L568.27 555.38 L568.41 553.53 L568.52 551.72 L568.60 549.97 L568.67 548.26 L568.71 546.61 L568.74 545.01 L568.74 543.45 L568.72 541.95 L568.68 540.50 L568.62 539.10 L568.54 537.74 L568.43 536.44 L568.31 535.19 L568.17 533.98 L568.01 532.83 L567.82 531.72 L567.62 530.67 L567.39 529.66 L567.15 528.70 L566.88 527.79 L566.59 526.92 L566.28 526.10 L565.94 525.33 L565.59 524.61 L565.20 523.93 L564.80 523.30 L564.37 522.71 L563.91 522.17 L563.43 521.67 L562.92 521.22 L562.39 520.81 L561.82 520.44 L561.22 520.11 L560.59 519.82 L559.93 519.57 L564.13 520.87 L563.44 520.70 L562.76 520.58 L562.08 520.52 L561.40 520.50 L560.72 520.54 L560.05 520.63 L559.37 520.77 L558.69 520.96 L558.00 521.20 L557.31 521.50 L556.61 521.84 L555.91 522.24 L555.20 522.69 L554.48 523.19 L553.76 523.74 L553.02 524.34 L552.28 525.00 L551.52 525.70 L550.76 526.46 L549.99 527.27 L549.20 528.13 L548.40 529.05 L547.60 530.01 L546.78 531.03 L545.95 532.10 L545.11 533.23 L544.26 534.41 L543.40 535.64 L542.52 536.92 L541.64 538.26 L540.74 539.65 L539.84 541.09 L538.92 542.59 L537.99 544.15 L537.06 545.76 L536.11 547.42 L535.15 549.13 L534.18 550.91 L533.21 552.73 L532.23 554.62 L533.10 552.68 L533.92 550.78 L534.70 548.92 L535.45 547.10 L536.15 545.32 L536.83 543.59 L537.46 541.89 L538.06 540.24 L538.63 538.63 L539.16 537.06 L539.65 535.54 L540.11 534.06 L540.54 532.61 L540.93 531.21 L541.28 529.86 L541.60 528.54 L541.89 527.26 L542.14 526.03 L542.36 524.84 L542.55 523.69 L542.70 522.58 L542.81 521.51 L542.89 520.48 L542.94 519.49 L542.95 518.54 L542.93 517.62 L542.88 516.75 L542.78 515.92 L542.66 515.12 L542.49 514.36 L542.29 513.64 L542.05 512.95 L541.78 512.30 L541.46 511.68 L541.11 511.10 L540.72 510.54 L540.29 510.02 L539.81 509.53 L539.29 509.07 L538.73 508.63 L542.37 511.11 L541.76 510.75 L541.14 510.44 L540.51 510.18 L539.87 509.96 L539.21 509.80 L538.54 509.68 L537.85 509.62 L537.14 509.60 L536.41 509.63 L535.67 509.71 L534.90 509.83 L534.11 510.00 L533.30 510.22 L532.47 510.49 L531.61 510.80 L530.73 511.16 L529.83 511.57 L528.90 512.02 L527.94 512.52 L526.96 513.06 L525.96 513.66 L524.93 514.29 L523.87 514.98 L522.79 515.71 L521.68 516.49 L520.55 517.32 L519.39 518.19 L518.20 519.12 L516.99 520.09 L515.75 521.10 L514.48 522.17 L513.19 523.28 L511.87 524.45 L510.53 525.66 L509.16 526.92 L507.77 528.23 L506.35 529.58 L504.90 530.99 L503.43 532.45 L501.94 533.97 L503.34 532.37 L504.68 530.79 L505.98 529.24 L507.23 527.73 L508.43 526.24 L509.58 524.78 L510.69 523.35 L511.75 521.95 L512.76 520.57 L513.73 519.23 L514.65 517.92 L515.53 516.64 L516.36 515.39 L517.15 514.16 L517.89 512.97 L518.58 511.81 L519.23 510.67 L519.84 509.57 L520.40 508.49 L520.91 507.45 L521.38 506.43 L521.81 505.44 L522.19 504.48 L522.53 503.55 L522.82 502.65 L523.07 501.77 L523.27 500.92 L523.43 500.09 L523.54 499.29 L523.61 498.52 L523.63 497.77 L523.61 497.04 L523.53 496.34 L523.42 495.66 L523.25 494.99 L523.04 494.35 L522.78 493.72 L522.47 493.11 L522.11 492.52 L521.71 491.94 L524.45 495.38 L523.97 494.85 L523.47 494.37 L522.95 493.94 L522.40 493.54 L521.82 493.19 L521.21 492.89 L520.57 492.62 L519.90 492.39 L519.19 492.21 L518.46 492.06 L517.69 491.95 L516.88 491.89 L516.05 491.86 L515.17 491.87 L514.26 491.91 L513.31 492.00 L512.33 492.12 L511.31 492.28 L510.25 492.47 L509.15 492.70 L508.02 492.97 L506.85 493.28 L505.64 493.62 L504.39 494.01 L503.10 494.42 L501.77 494.88 L500.40 495.37 L499.00 495.90 L497.55 496.47 L496.07 497.08 L494.54 497.73 L492.98 498.41 L491.38 499.13 L489.74 499.89 L488.06 500.69 L486.34 501.53 L484.58 502.41 L482.78 503.33 L480.95 504.29 L479.08 505.30 L480.89 504.18 L482.64 503.08 L484.33 501.98 L485.97 500.90 L487.56 499.83 L489.09 498.77 L490.57 497.73 L492.00 496.71 L493.37 495.69 L494.69 494.70 L495.96 493.72 L497.17 492.75 L498.34 491.80 L499.45 490.86 L500.51 489.94 L501.51 489.03 L502.47 488.14 L503.37 487.26 L504.22 486.40 L505.03 485.55 L505.78 484.72 L506.47 483.90 L507.12 483.10 L507.72 482.30 L508.26 481.53 L508.76 480.76 L509.20 480.01 L509.60 479.27 L509.94 478.54 L510.23 477.82 L510.48 477.11 L510.67 476.40 L510.81 475.71 L510.89 475.02 L510.93 474.34 L510.92 473.66 L510.86 472.99 L510.74 472.32 L510.57 471.64 L510.35 470.97 L511.96 475.06 L511.66 474.42 L511.33 473.81 L510.95 473.24 L510.54 472.70 L510.09 472.20 L509.60 471.72 L509.07 471.28 L508.49 470.87 L507.88 470.48 L507.22 470.13 L506.51 469.80 L505.76 469.50 L504.97 469.22 L504.13 468.97 L503.25 468.75 L502.32 468.55 L501.34 468.37 L500.32 468.22 L499.25 468.10 L498.14 468.00 L496.97 467.92 L495.76 467.87 L494.50 467.84 L493.19 467.84 L491.84 467.86 L490.44 467.90 L488.99 467.97 L487.49 468.06 L485.94 468.18 L484.34 468.32 L482.69 468.49 L481.00 468.68 L479.26 468.90 L477.46 469.15 L475.62 469.42 L473.73 469.71 L471.79 470.03 L469.80 470.38 L467.77 470.76 L465.68 471.17 L467.74 470.64 L469.74 470.09 L471.68 469.54 L473.57 468.99 L475.40 468.44 L477.17 467.88 L478.90 467.33 L480.56 466.77 L482.17 466.20 L483.73 465.64 L485.23 465.08 L486.67 464.51 L488.07 463.94 L489.40 463.38 L490.69 462.81 L491.92 462.24 L493.09 461.67 L494.21 461.09 L495.28 460.52 L496.30 459.95 L497.26 459.37 L498.17 458.80 L499.03 458.22 L499.83 457.64 L500.58 457.06 L501.28 456.47 L501.93 455.88 L502.52 455.29 L503.06 454.69 L503.56 454.09 L504.00 453.48 L504.38 452.87 L504.72 452.25 L505.01 451.62 L505.25 450.98 L505.44 450.32 L505.57 449.66 L505.66 448.98 L505.70 448.29 L505.69 447.58 L506.02 451.97 L505.92 451.27 L505.78 450.59 L505.59 449.93 L505.36 449.30 L505.08 448.68 L504.75 448.08 L504.37 447.50 L503.94 446.94 L503.46 446.39 L502.94 445.85 L502.36 445.33 L501.74 444.82 L501.06 444.32 L500.33 443.84 L499.55 443.36 L498.72 442.90 L497.84 442.45 L496.91 442.00 L495.93 441.57 L494.89 441.14 L493.80 440.73 L492.66 440.32 L491.46 439.92 L490.22 439.53 L488.91 439.15 L487.56 438.78 L486.15 438.42 L484.69 438.06 L483.18 437.72 L481.61 437.39 L479.99 437.06 L478.31 436.75 L476.58 436.44 L474.80 436.15 L472.96 435.86 L471.06 435.59 L469.12 435.32 L467.11 435.07 L465.06 434.83 L462.94 434.61 L465.07 434.70 L467.14 434.77 L469.15 434.82 L471.12 434.85 L473.03 434.86 L474.89 434.85 L476.70 434.83 L478.46 434.78 L480.16 434.72 L481.82 434.64 L483.42 434.55 L484.97 434.43 L486.46 434.30 L487.91 434.15 L489.30 433.99 L490.64 433.80 L491.94 433.61 L493.18 433.39 L494.37 433.16 L495.51 432.91 L496.59 432.64 L497.63 432.36 L498.62 432.06 L499.56 431.74 L500.45 431.41 L501.29 431.05 L502.08 430.68 L502.83 430.29 L503.52 429.88 L504.17 429.45 L504.77 429.00 L505.32 428.53 L505.83 428.03 L506.29 427.51 L506.70 426.97 L507.07 426.40 L507.40 425.81 L507.68 425.19 L507.93 424.54 L508.12 423.86 L507.15 428.15 L507.26 427.45 L507.33 426.76 L507.34 426.08 L507.30 425.40 L507.21 424.73 L507.08 424.06 L506.89 423.39 L506.64 422.73 L506.35 422.06 L506.01 421.40 L505.61 420.73 L505.16 420.06 L504.66 419.38 L504.11 418.70 L503.51 418.02 L502.85 417.33 L502.14 416.64 L501.38 415.94 L500.57 415.23 L499.70 414.52 L498.78 413.80 L497.81 413.08 L496.79 412.35 L495.71 411.61 L494.58 410.86 L493.40 410.11 L492.16 409.34 L490.87 408.58 L489.52 407.80 L488.12 407.02 L486.67 406.23 L485.16 405.44 L483.59 404.63 L481.98 403.83 L480.30 403.01 L478.57 402.19 L476.79 401.36 L474.95 400.53 L473.06 399.70 L471.10 398.86 L473.10 399.58 L475.06 400.26 L476.97 400.90 L478.84 401.51 L480.67 402.08 L482.45 402.62 L484.18 403.13 L485.88 403.60 L487.52 404.05 L489.13 404.46 L490.68 404.84 L492.20 405.19 L493.67 405.50 L495.09 405.79 L496.47 406.04 L497.81 406.26 L499.10 406.45 L500.35 406.61 L501.56 406.74 L502.72 406.84 L503.84 406.90 L504.91 406.94 L505.95 406.94 L506.94 406.92 L507.89 406.86 L508.79 406.77 L509.66 406.65 L510.48 406.49 L511.27 406.31 L512.01 406.08 L512.72 405.83 L513.39 405.54 L514.02 405.22 L514.61 404.86 L515.17 404.46 L515.69 404.03 L516.18 403.56 L516.63 403.05 L517.05 402.50 L517.44 401.91 L515.24 405.72 L515.56 405.09 L515.83 404.45 L516.04 403.80 L516.20 403.14 L516.32 402.47 L516.38 401.79 L516.40 401.10 L516.36 400.39 L516.28 399.67 L516.15 398.93 L515.96 398.18 L515.73 397.40 L515.45 396.61 L515.13 395.80 L514.75 394.97 L514.33 394.12 L513.85 393.25 L513.33 392.35 L512.77 391.44 L512.15 390.50 L511.48 389.55 L510.77 388.57 L510.01 387.57 L509.19 386.54 L508.33 385.49 L507.42 384.42 L506.47 383.33 L505.46 382.22 L504.40 381.08 L503.29 379.92 L502.14 378.74 L500.93 377.53 L499.67 376.31 L498.36 375.06 L497.00 373.79 L495.59 372.49 L494.13 371.18 L492.62 369.84 L491.06 368.48 L489.43 367.11 L491.13 368.39 L492.80 369.61 L494.44 370.79 L496.05 371.92 L497.63 373.00 L499.17 374.05 L500.68 375.04 L502.15 376.00 L503.60 376.91 L505.01 377.77 L506.38 378.59 L507.73 379.37 L509.04 380.10 L510.32 380.80 L511.56 381.45 L512.77 382.05 L513.95 382.61 L515.10 383.13 L516.21 383.61 L517.30 384.05 L518.35 384.44 L519.36 384.79 L520.35 385.10 L521.30 385.37 L522.23 385.59 L523.12 385.77 L523.98 385.91 L524.82 386.01 L525.62 386.06 L526.40 386.07 L527.15 386.04 L527.87 385.96 L528.57 385.83 L529.24 385.67 L529.89 385.45 L530.52 385.19 L531.12 384.89 L531.71 384.53 L532.27 384.13 L532.82 383.68 L529.59 386.67 L530.08 386.16 L530.53 385.63 L530.92 385.07 L531.27 384.49 L531.58 383.89 L531.84 383.26 L532.06 382.60 L532.23 381.91 L532.37 381.20 L532.46 380.45 L532.51 379.68 L532.51 378.87 L532.48 378.03 L532.41 377.16 L532.29 376.26 L532.14 375.32 L531.94 374.35 L531.71 373.34 L531.43 372.30 L531.12 371.22 L530.77 370.11 L530.37 368.96 L529.94 367.78 L529.47 366.56 L528.95 365.31 L528.40 364.02 L527.80 362.69 L527.17 361.33 L526.49 359.93 L525.78 358.50 L525.02 357.03 L524.22 355.52 L523.38 353.98 L522.50 352.40 L521.58 350.78 L520.61 349.13 L519.60 347.44 L518.55 345.72 L517.46 343.96 L516.31 342.17 L517.56 343.89 L518.80 345.55 L520.02 347.16 L521.22 348.72 L522.40 350.22 L523.57 351.67 L524.72 353.07 L525.85 354.41 L526.96 355.71 L528.05 356.95 L529.12 358.14 L530.18 359.28 L531.22 360.37 L532.23 361.41 L533.23 362.39 L534.21 363.33 L535.17 364.21 L536.11 365.05 L537.04 365.84 L537.94 366.57 L538.83 367.26 L539.70 367.89 L540.55 368.48 L541.38 369.01 L542.20 369.50 L543.00 369.94 L543.78 370.32 L544.55 370.66 L545.31 370.95 L546.05 371.19 L546.77 371.37 L547.49 371.51 L548.19 371.60 L548.88 371.64 L549.56 371.62 L550.24 371.56 L550.91 371.45 L551.57 371.28 L552.23 371.06 L552.88 370.80 L548.92 372.70 L549.54 372.36 L550.12 371.98 L550.66 371.56 L551.17 371.11 L551.64 370.63 L552.07 370.10 L552.48 369.54 L552.85 368.93 L553.18 368.29 L553.49 367.60 L553.76 366.88 L554.01 366.11 L554.23 365.30 L554.41 364.44 L554.57 363.54 L554.70 362.60 L554.80 361.62 L554.87 360.58 L554.92 359.51 L554.93 358.39 L554.92 357.22 L554.88 356.01 L554.82 354.75 L554.73 353.45 L554.60 352.10 L554.46 350.70 L554.28 349.26 L554.07 347.77 L553.84 346.24 L553.58 344.66 L553.29 343.03 L552.97 341.35 L552.62 339.63 L552.24 337.86 L551.84 336.04 L551.40 334.18 L550.94 332.27 L550.44 330.31 L549.91 328.31 L549.35 326.26 L550.03 328.28 L550.72 330.23 L551.41 332.12 L552.11 333.96 L552.79 335.75 L553.48 337.48 L554.17 339.15 L554.85 340.77 L555.53 342.34 L556.21 343.84 L556.88 345.30 L557.55 346.70 L558.22 348.04 L558.89 349.34 L559.55 350.57 L560.21 351.76 L560.87 352.89 L561.52 353.96 L562.18 354.99 L562.82 355.95 L563.47 356.87 L564.11 357.73 L564.75 358.55 L565.39 359.30 L566.03 360.01 L566.66 360.66 L567.30 361.26 L567.93 361.81 L568.57 362.31 L569.21 362.75 L569.85 363.15 L570.49 363.49 L571.13 363.78 L571.78 364.02 L572.44 364.21 L573.10 364.35 L573.78 364.43 L574.46 364.47 L575.15 364.46 L575.86 364.40 Z"/></defs>
<use href="#sunp" transform="translate(1.4 1.4)" fill="#141010" stroke="#141010" stroke-width="2.6" stroke-linejoin="round"/>
<use href="#sunp" fill="#141010" stroke="#141010" stroke-width="2.4" stroke-linejoin="round"/>
<use href="#sunp" transform="translate(-2 -1.5)" fill="#141010" stroke="#141010" stroke-width="1.6" stroke-linejoin="round"/>
<use href="#sunp" transform="translate(-2 -1.5)" fill="#fffbea"/>
<use href="#sunp" fill="#e9c97c"/>

<circle cx="585.6" cy="443.8" r="71.4" fill="#f3f1dc"/>
<g filter="url(#fxst)">
<path d="M264.2 333.8 C262.7 339.4 264.6 342.7 270.2 344.2 C264.6 342.7 261.3 344.6 259.8 350.2 C261.3 344.6 259.4 341.3 253.8 339.8 C259.4 341.3 262.7 339.4 264.2 333.8 Z" fill="#fff"/><path d="M355.1 340.9 C353.3 347.8 355.6 351.9 362.5 353.7 C355.6 351.9 351.5 354.2 349.7 361.1 C351.5 354.2 349.2 350.1 342.3 348.3 C349.2 350.1 353.3 347.8 355.1 340.9 Z" fill="#fff"/><path d="M437.1 355.0 C434.7 363.8 437.8 369.1 446.6 371.5 C437.8 369.1 432.5 372.2 430.1 381.0 C432.5 372.2 429.4 366.9 420.6 364.5 C429.4 366.9 434.7 363.8 437.1 355.0 Z" fill="#fff"/><path d="M964.0 353.7 C962.2 360.6 964.5 364.7 971.4 366.5 C964.5 364.7 960.4 367.0 958.6 373.9 C960.4 367.0 958.1 362.9 951.2 361.1 C958.1 362.9 962.2 360.6 964.0 353.7 Z" fill="#fff"/><path d="M998.3 427.0 C993.0 446.7 999.8 458.5 1019.5 463.8 C999.8 458.5 988.0 465.3 982.7 485.0 C988.0 465.3 981.2 453.5 961.5 448.2 C981.2 453.5 993.0 446.7 998.3 427.0 Z" fill="#fff"/><path d="M748.0 495.3 C744.7 507.5 748.9 514.7 761.1 518.0 C748.9 514.7 741.7 518.9 738.4 531.1 C741.7 518.9 737.5 511.7 725.3 508.4 C737.5 511.7 744.7 507.5 748.0 495.3 Z" fill="#fff"/>
</g>
<rect x="180.5" y="579.8" width="302.4" height="169.9" fill="#f3f1dc"/>
<g filter="url(#fxt)" fill="#fff" font-family="Liberation Sans" font-weight="bold">
<text x="179" y="541.3" font-size="28" textLength="247.5" lengthAdjust="spacingAndGlyphs" stroke="#fff" stroke-width="1.6" stroke-linejoin="round">NEW VIDEO:</text>
<text x="799" y="541.5" font-size="28" textLength="198.5" lengthAdjust="spacingAndGlyphs" stroke="#fff" stroke-width="1.6" stroke-linejoin="round">RELATED:</text>
</g>
<g filter="url(#fxs)">
<circle cx="585.3" cy="593" r="21" fill="#fff"/><circle cx="585.3" cy="644.2" r="21" fill="#fff"/><circle cx="585.6" cy="695.4" r="21" fill="#fff"/><circle cx="585.6" cy="747" r="21" fill="#fff"/>
<path d="M642 698 L688.5 698 L688.5 730 L642 730 L643.5 724 L642 719 L644 712 L642 705 Z" fill="#fff"/>
</g>
<circle cx="585.3" cy="593" r="16" fill="#4b7be2"/>
<path d="M588 609 L588 597 L592.5 597 L593.2 592.5 L588 592.5 L588 589.5 Q588 587 590.7 587 L593.5 587 L593.5 582.8 Q591.5 582.5 589.5 582.5 Q583.2 582.5 583.2 589 L583.2 592.5 L578.5 592.5 L578.5 597 L583.2 597 L583.2 609 Z" fill="#fff"/>
<circle cx="585.3" cy="644.2" r="16" fill="url(#ig)"/>
<rect x="576.8" y="635.7" width="17" height="17" rx="5" fill="none" stroke="#fff" stroke-width="1.9"/><circle cx="585.3" cy="644.2" r="4" fill="none" stroke="#fff" stroke-width="1.9"/><circle cx="590" cy="639.4" r="1.2" fill="#fff"/>
<circle cx="585.6" cy="695.4" r="16" fill="#d42c22"/>
<rect x="575.2" y="688.5" width="20.8" height="14" rx="4" fill="#fff"/><path d="M583 691.5 L589.5 695.4 L583 699.3 Z" fill="#d42c22"/>
<circle cx="585.6" cy="747" r="16" fill="#5b95e3"/>
<path d="M596 739.8 Q594.8 740.3 593.6 740.5 Q594.9 739.7 595.4 738.3 Q594.1 739 592.8 739.3 Q591.6 738 589.8 738 Q586.3 738 586.3 741.5 L586.4 742.3 Q581.4 742 578.1 738.1 Q576.9 740.8 579.3 742.8 Q578.3 742.8 577.6 742.4 Q577.7 745.2 580.4 746 Q579.6 746.2 578.8 746.1 Q579.6 748.5 582.2 748.6 Q579.8 750.5 576.6 750.2 Q579.3 752 582.5 752 Q593.7 752 593.7 741.8 L593.7 741.3 Q595 740.6 596 739.8 Z" fill="#fff"/>
<g fill="#111">
<rect x="645" y="702.5" width="1" height="23"/><rect x="647" y="702.5" width="1.6" height="23"/><rect x="650" y="702.5" width="2.5" height="23"/><rect x="654" y="702.5" width="1" height="23"/><rect x="656.5" y="702.5" width="1.2" height="23"/><rect x="659" y="702.5" width="2.6" height="23"/><rect x="663" y="702.5" width="1" height="23"/><rect x="665" y="702.5" width="1.4" height="23"/><rect x="668" y="702.5" width="2.8" height="23"/><rect x="672" y="702.5" width="1" height="23"/><rect x="674.5" y="702.5" width="1.2" height="23"/><rect x="677" y="702.5" width="2.6" height="23"/><rect x="681" y="702.5" width="1" height="23"/><rect x="683" y="702.5" width="1.5" height="23"/><rect x="686" y="702.5" width="2.2" height="23"/>
</g>
<rect x="688.2" y="579.8" width="302.6" height="169.9" fill="#f3f1dc"/>
<g filter="url(#fxt)" fill="#fff" font-family="Liberation Sans" font-weight="bold">
<text x="501" y="807.5" font-size="21" font-weight="normal" textLength="172" lengthAdjust="spacing" stroke="#fff" stroke-width="1.3" stroke-linejoin="round" stroke-linecap="round" transform="rotate(1.5 587 800)">aNDREW-SKOCh</text>
</g>
<g filter="url(#fx)" font-family="Liberation Sans" stroke-linejoin="round" stroke-linecap="round">
<text transform="translate(794 381) rotate(-15)" font-size="23" textLength="121" lengthAdjust="spacingAndGlyphs" fill="#fff" stroke="#fff" stroke-width="1">THANK YOU!</text>
<text transform="translate(784 413) rotate(-14.5)" font-size="23" textLength="120" lengthAdjust="spacingAndGlyphs" fill="#8dd0c6" stroke="#8dd0c6" stroke-width="1">THANK YOU!</text>
<text transform="translate(753 461) rotate(-14) skewX(-3)" font-size="33" textLength="179" lengthAdjust="spacingAndGlyphs" fill="#d66c58" stroke="#d66c58" stroke-width="1.3">THANK YOU!</text>
</g>
</svg>

<svg class="a" style="left:1085px;top:164px" width="375" height="780" viewBox="1085 164 375 780"><g fill="#dedede">
<path d="M1097 194 Q1097 191 1101 191 L1104 193.5 L1101 196 Q1097 196 1097 194Z"/><rect x="1104" y="193" width="11" height="1.6"/>
<rect x="1097" y="199.5" width="9" height="1.6"/><path d="M1106 200.3 L1113 196.5 Q1116 200.3 1113 204 Z"/>
<rect x="1099" y="218" width="15" height="13"/>
<path d="M1098 271 Q1098 266 1102 266 L1112 257 L1114 259 L1106 269 Q1104 273 1098 271Z"/>
<rect x="1098" y="257" width="1.5" height="1.5"/><rect x="1101" y="257" width="4" height="1.5"/><rect x="1098" y="260.5" width="1.5" height="1.5"/><rect x="1101" y="260.5" width="4" height="1.5"/><rect x="1098" y="264" width="1.5" height="1.5"/><rect x="1101" y="264" width="2" height="1.5"/>
</g>
<g fill="#535353"><rect x="1101" y="220" width="2" height="2"/><rect x="1105" y="220" width="3" height="2"/><rect x="1110" y="220" width="2" height="2"/><rect x="1101" y="224" width="3" height="2"/><rect x="1106" y="223" width="1" height="5"/><rect x="1109" y="224" width="3" height="2"/><rect x="1101" y="228" width="2" height="2"/><rect x="1105" y="228" width="3" height="2"/><rect x="1110" y="228" width="2" height="2"/></g>
<g stroke="#474747" stroke-dasharray="1 1"><line x1="1098" y1="180.5" x2="1114" y2="180.5"/><line x1="1098" y1="248.5" x2="1114" y2="248.5"/></g>
<rect x="1439.5" y="185.0" width="11" height="1.4" fill="#c8c8c8"/>
<rect x="1439.5" y="187.6" width="11" height="1.4" fill="#c8c8c8"/>
<rect x="1439.5" y="190.2" width="11" height="1.4" fill="#c8c8c8"/>
<rect x="1439.5" y="192.8" width="11" height="1.4" fill="#c8c8c8"/>
<rect x="1439.5" y="407.0" width="11" height="1.4" fill="#c8c8c8"/>
<rect x="1439.5" y="409.6" width="11" height="1.4" fill="#c8c8c8"/>
<rect x="1439.5" y="412.2" width="11" height="1.4" fill="#c8c8c8"/>
<rect x="1439.5" y="414.8" width="11" height="1.4" fill="#c8c8c8"/>
<path d="M1238 223.5 L1241 226.5 L1244 223.5" fill="none" stroke="#d0d0d0" stroke-width="1.1"/>
<path d="M1321 223.5 L1324 226.5 L1327 223.5" fill="none" stroke="#d0d0d0" stroke-width="1.1"/>
<path d="M1214 246.5 L1217 249.5 L1220 246.5" fill="none" stroke="#d0d0d0" stroke-width="1.1"/>
<path d="M1321 246.5 L1324 249.5 L1327 246.5" fill="none" stroke="#d0d0d0" stroke-width="1.1"/>
<path d="M1214 266.5 L1217 269.5 L1220 266.5" fill="none" stroke="#d0d0d0" stroke-width="1.1"/>
<path d="M1321 266.5 L1324 269.5 L1327 266.5" fill="none" stroke="#d0d0d0" stroke-width="1.1"/>
<path d="M1233 381.5 L1236 384.5 L1239 381.5" fill="none" stroke="#d0d0d0" stroke-width="1.1"/>
<path d="M1322 381.5 L1325 384.5 L1328 381.5" fill="none" stroke="#d0d0d0" stroke-width="1.1"/>
<path d="M1205 441.5 L1208 444.5 L1211 441.5" fill="none" stroke="#d0d0d0" stroke-width="1.1"/>
<path d="M1245 469.5 L1248 472.5 L1251 469.5" fill="none" stroke="#777" stroke-width="1.1"/>
<path d="M1342 469.5 L1345 472.5 L1348 469.5" fill="none" stroke="#777" stroke-width="1.1"/>
<path d="M1342 496.5 L1345 499.5 L1348 496.5" fill="none" stroke="#777" stroke-width="1.1"/>
<circle cx="1142" cy="442" r="3.6" fill="none" stroke="#e0e0e0" stroke-width="1.3"/><path d="M1144.7 444.7 L1147.5 447.5" stroke="#e0e0e0" stroke-width="1.5"/>
<rect x="1228" y="438" width="11" height="9" fill="none" stroke="#d8d8d8" stroke-width="1.2"/><path d="M1229.5 446 L1232.5 442 L1234.5 444 L1236 442.5 L1238 446 Z" fill="#d8d8d8"/>
<circle cx="1256" cy="443" r="5" fill="none" stroke="#d8d8d8" stroke-width="1.3"/><path d="M1259.5 439.5 A5 5 0 0 1 1252.5 446.5 Z" fill="#d8d8d8"/>
<rect x="1298" y="438" width="10" height="10" fill="none" stroke="#d8d8d8" stroke-width="1.2"/><g fill="#d8d8d8"><rect x="1296.5" y="436.5" width="3" height="3"/><rect x="1306.5" y="436.5" width="3" height="3"/><rect x="1296.5" y="446.5" width="3" height="3"/><rect x="1306.5" y="446.5" width="3" height="3"/></g>
<path d="M1324 440 L1329 440 L1331 442 L1331 448 L1324 448 Z" fill="#d8d8d8"/><rect x="1322.5" y="443.5" width="5" height="5" fill="#535353" stroke="#d8d8d8" stroke-width="1"/>
<rect x="1345.5" y="437" width="7" height="13" rx="3.5" fill="#3e3e3e" stroke="#555"/><circle cx="1349" cy="439.5" r="3.3" fill="#e6e6e6"/>
<g fill="#9a9a9a"><rect x="1165" y="492" width="11" height="11" fill="none" stroke="#9a9a9a"/><rect x="1167" y="494" width="2.3" height="2.3"/><rect x="1171.5" y="494" width="2.3" height="2.3"/><rect x="1169.2" y="496.5" width="2.3" height="2.3"/><rect x="1167" y="499" width="2.3" height="2.3"/><rect x="1171.5" y="499" width="2.3" height="2.3"/>
<path d="M1187 504 Q1187 500 1190 499.5 L1197 492 L1198.5 493.5 L1192 501 Q1191 504 1187 504Z"/>
<path d="M1213 491.5 L1215.3 494 L1214 494 L1214 497 L1217 497 L1217 495.7 L1219.5 498 L1217 500.3 L1217 499 L1214 499 L1214 502 L1215.3 502 L1213 504.5 L1210.7 502 L1212 502 L1212 499 L1209 499 L1209 500.3 L1206.5 498 L1209 495.7 L1209 497 L1212 497 L1212 494 L1210.7 494 Z"/>
<rect x="1252" y="497" width="10" height="7.5" rx="1"/><path d="M1254 497 L1254 494.5 Q1257 490 1260 494.5 L1260 497" fill="none" stroke="#9a9a9a" stroke-width="1.4"/>
</g>
<path d="M1229 494 L1240 494 L1240 503 L1231 503 Z M1231 491 L1231 505 M1238 492 L1242 492" fill="none" stroke="#9a9a9a" stroke-width="1.1"/>
<path d="M1136 525.5 Q1142 519.5 1148 525.5 Q1142 531.5 1136 525.5 Z" fill="none" stroke="#e6e6e6" stroke-width="1.5"/><circle cx="1142" cy="525.5" r="2.2" fill="#e6e6e6"/>
<path d="M1162.5 522.0 L1165.5 525.5 L1162.5 529.0" fill="none" stroke="#cfcfcf" stroke-width="1"/>
<path d="M1172 520.5 L1177 520.5 L1178.5 522.0 L1186 522.0 L1186 530.5 L1172 530.5 Z" fill="#dedede"/>
<path d="M1136 550 Q1142 544 1148 550 Q1142 556 1136 550 Z" fill="none" stroke="#e6e6e6" stroke-width="1.5"/><circle cx="1142" cy="550" r="2.2" fill="#e6e6e6"/>
<path d="M1162.5 546.5 L1165.5 550 L1162.5 553.5" fill="none" stroke="#cfcfcf" stroke-width="1"/>
<path d="M1172 545 L1177 545 L1178.5 546.5 L1186 546.5 L1186 555 L1172 555 Z" fill="#dedede"/>
<path d="M1136 589 Q1142 583 1148 589 Q1142 595 1136 589 Z" fill="none" stroke="#e6e6e6" stroke-width="1.5"/><circle cx="1142" cy="589" r="2.2" fill="#e6e6e6"/>
<path d="M1432.2 587.5 L1435 590.5 L1437.8 587.5" fill="none" stroke="#d0d0d0" stroke-width="1.1"/>
<path d="M1136 643 Q1142 637 1148 643 Q1142 649 1136 643 Z" fill="none" stroke="#e6e6e6" stroke-width="1.5"/><circle cx="1142" cy="643" r="2.2" fill="#e6e6e6"/>
<path d="M1432.2 641.5 L1435 644.5 L1437.8 641.5" fill="none" stroke="#d0d0d0" stroke-width="1.1"/>
<path d="M1136 696.5 Q1142 690.5 1148 696.5 Q1142 702.5 1136 696.5 Z" fill="none" stroke="#e6e6e6" stroke-width="1.5"/><circle cx="1142" cy="696.5" r="2.2" fill="#e6e6e6"/>
<path d="M1432.2 695.0 L1435 698.0 L1437.8 695.0" fill="none" stroke="#d0d0d0" stroke-width="1.1"/>
<path d="M1136 750 Q1142 744 1148 750 Q1142 756 1136 750 Z" fill="none" stroke="#e6e6e6" stroke-width="1.5"/><circle cx="1142" cy="750" r="2.2" fill="#e6e6e6"/>
<path d="M1432.2 748.5 L1435 751.5 L1437.8 748.5" fill="none" stroke="#d0d0d0" stroke-width="1.1"/>
<path d="M1136 803.5 Q1142 797.5 1148 803.5 Q1142 809.5 1136 803.5 Z" fill="none" stroke="#e6e6e6" stroke-width="1.5"/><circle cx="1142" cy="803.5" r="2.2" fill="#e6e6e6"/>
<path d="M1432.2 802.0 L1435 805.0 L1437.8 802.0" fill="none" stroke="#d0d0d0" stroke-width="1.1"/>
<path d="M1136 857 Q1142 851 1148 857 Q1142 863 1136 857 Z" fill="none" stroke="#e6e6e6" stroke-width="1.5"/><circle cx="1142" cy="857" r="2.2" fill="#e6e6e6"/>
<path d="M1432.2 855.5 L1435 858.5 L1437.8 855.5" fill="none" stroke="#d0d0d0" stroke-width="1.1"/>
<path d="M1136 896 Q1142 890 1148 896 Q1142 902 1136 896 Z" fill="none" stroke="#e6e6e6" stroke-width="1.5"/><circle cx="1142" cy="896" r="2.2" fill="#e6e6e6"/>
<path d="M1162.5 892.5 L1165.5 896 L1162.5 899.5" fill="none" stroke="#cfcfcf" stroke-width="1"/>
<path d="M1172 891 L1177 891 L1178.5 892.5 L1186 892.5 L1186 901 L1172 901 Z" fill="#dedede"/>
<path d="M1444 524 L1447 521 L1450 524" fill="none" stroke="#bdbdbd" stroke-width="1"/><path d="M1444 904 L1447 907 L1450 904" fill="none" stroke="#bdbdbd" stroke-width="1"/>
<g fill="none" stroke="#9c9c9c" stroke-width="1.4"><path d="M1261 925 L1259 925 Q1256 927 1259 929.5 L1262 929.5 M1266 925 L1269 925 Q1272 927 1269 929.5 L1266 929.5 M1261 927.2 L1267 927.2"/></g>
<text x="1284" y="931" font-family="Liberation Serif" font-style="italic" font-size="12.5" fill="#9c9c9c">fx</text>
<rect x="1311" y="922" width="12" height="9" fill="#b8b8b8"/><circle cx="1317" cy="926.5" r="2.8" fill="#535353"/>
<circle cx="1343" cy="927" r="5" fill="none" stroke="#dedede" stroke-width="1.3"/><path d="M1346.5 923.5 A5 5 0 0 1 1339.5 930.5 Z" fill="#dedede"/><path d="M1347 932 L1349 934 L1351 932Z" fill="#dedede"/>
<path d="M1363.5 922 L1368 922 L1369.5 923.5 L1376.5 923.5 L1376.5 932 L1363.5 932 Z" fill="#dedede"/>
<rect x="1390.5" y="921.5" width="11" height="11" fill="none" stroke="#dedede" stroke-width="1.2"/><path d="M1396 924 L1396 930 M1393 927 L1399 927" stroke="#dedede" stroke-width="1.2"/>
<path d="M1417 923.5 L1427 923.5 M1420 923.5 L1420.5 921.5 L1423.5 921.5 L1424 923.5 M1418 924 L1419 933 L1425 933 L1426 924 M1420.5 926 L1420.5 931 M1422 926 L1422 931 M1423.5 926 L1423.5 931" fill="none" stroke="#8a8a8a" stroke-width="1"/></svg>
<div class="a" style="left:1131px;top:243px;font-size:15px;color:#dcdcdc;white-space:nowrap;font-family:'Liberation Serif',serif;line-height:1;"><span style="font-size:8px">T</span>T</div>
<div class="a" style="left:1131px;top:261px;font-size:12.5px;color:#d6d6d6;white-space:nowrap;font-family:'Liberation Serif',serif;line-height:1;font-family:'Liberation Sans';letter-spacing:-1px">V/A</div>
<div class="a" style="left:1131px;top:280px;font-size:15px;color:#dcdcdc;white-space:nowrap;font-family:'Liberation Serif',serif;line-height:1;letter-spacing:-2px">&#8597;T</div>
<div class="a" style="left:1131px;top:300px;font-size:13px;color:#d6d6d6;white-space:nowrap;font-family:'Liberation Serif',serif;line-height:1;font-family:'Liberation Sans'">A<sup style="font-size:7px">a</sup></div>
<div class="a" style="left:1243px;top:239px;font-size:8.5px;color:#d6d6d6;line-height:8px;font-family:'Liberation Sans';white-space:nowrap"><span style="margin-left:5px">A</span><br><span style="font-size:7px">&#8597;</span>A</div>
<div class="a" style="left:1243px;top:259px;width:17px;height:11px;background:#dcdcdc;color:#535353;font-size:11px;font-weight:bold;line-height:11px;text-align:center;letter-spacing:-1px">VA</div>
<svg class="a" style="left:1242px;top:270px" width="20" height="6"><path d="M1 3 H19 M1 3 L3.5 1 M1 3 L3.5 5 M19 3 L16.5 1 M19 3 L16.5 5" stroke="#d6d6d6" stroke-width="1" fill="none"/></svg>
<div class="a" style="left:1259px;top:279px;font-size:13px;color:#e6e6e6;white-space:nowrap;font-family:'Liberation Serif',serif;line-height:1;font-weight:bold">T</div>
<svg class="a" style="left:1257px;top:290px" width="20" height="6"><path d="M1 3 H19 M1 3 L3.5 1 M1 3 L3.5 5 M19 3 L16.5 1 M19 3 L16.5 5" stroke="#d6d6d6" stroke-width="1" fill="none"/></svg>
<div class="a" style="left:1246px;top:375px;font-size:12px;color:#c8c8c8;white-space:nowrap;font-family:'Liberation Serif',serif;line-height:1;font-family:'Liberation Sans'"><span style="font-size:10px">a</span><span style="font-size:12px">a</span></div>
<div class="a" style="left:1144px;top:324px;font-size:14px;color:#8e8e8e;white-space:nowrap;font-family:'Liberation Serif',serif;line-height:1;font-weight:bold">T</div>
<div class="a" style="left:1168px;top:324px;font-size:14px;color:#8e8e8e;white-space:nowrap;font-family:'Liberation Serif',serif;line-height:1;"><i>T</i></div>
<div class="a" style="left:1188px;top:324px;font-size:14px;color:#d8d8d8;white-space:nowrap;font-family:'Liberation Serif',serif;line-height:1;font-weight:bold;">TT</div>
<div class="a" style="left:1213px;top:324px;font-size:14px;color:#d8d8d8;white-space:nowrap;font-family:'Liberation Serif',serif;line-height:1;font-weight:bold;">T<span style="font-size:10px">T</span></div>
<div class="a" style="left:1238px;top:324px;font-size:14px;color:#d8d8d8;white-space:nowrap;font-family:'Liberation Serif',serif;line-height:1;font-weight:bold;">T<sup style="font-size:7px">1</sup></div>
<div class="a" style="left:1261px;top:324px;font-size:14px;color:#d8d8d8;white-space:nowrap;font-family:'Liberation Serif',serif;line-height:1;font-weight:bold;">T<sub style="font-size:7px">1</sub></div>
<div class="a" style="left:1285px;top:324px;font-size:14px;color:#d8d8d8;white-space:nowrap;font-family:'Liberation Serif',serif;line-height:1;font-weight:bold;"><u>T</u></div>
<div class="a" style="left:1308px;top:324px;font-size:14px;color:#d8d8d8;white-space:nowrap;font-family:'Liberation Serif',serif;line-height:1;font-weight:bold;"><s>T</s></div>
<div class="a" style="left:1144px;top:350px;font-size:16px;color:#eaeaea;white-space:nowrap;font-family:'Liberation Serif',serif;line-height:1;font-size:17px;top:349px">fi</div>
<div class="a" style="left:1168px;top:350px;font-size:16px;color:#8e8e8e;white-space:nowrap;font-family:'Liberation Serif',serif;line-height:1;"><i>&#417;</i></div>
<div class="a" style="left:1191px;top:350px;font-size:16px;color:#8e8e8e;white-space:nowrap;font-family:'Liberation Serif',serif;line-height:1;">st</div>
<div class="a" style="left:1213px;top:350px;font-size:16px;color:#8e8e8e;white-space:nowrap;font-family:'Liberation Serif',serif;line-height:1;"><i>A</i></div>
<div class="a" style="left:1236px;top:350px;font-size:16px;color:#d8d8d8;white-space:nowrap;font-family:'Liberation Serif',serif;line-height:1;text-decoration:overline">aa</div>
<div class="a" style="left:1262px;top:350px;font-size:16px;color:#8e8e8e;white-space:nowrap;font-family:'Liberation Serif',serif;line-height:1;"><i>T</i></div>
<div class="a" style="left:1283px;top:350px;font-size:16px;color:#d8d8d8;white-space:nowrap;font-family:'Liberation Serif',serif;line-height:1;">1<sup style="font-size:8px">st</sup></div>
<div class="a" style="left:1307px;top:350px;font-size:16px;color:#d8d8d8;white-space:nowrap;font-family:'Liberation Serif',serif;line-height:1;">&#189;</div>






<div class="a" style="left:1274px;top:436px;font-size:14px;color:#d8d8d8;white-space:nowrap;font-family:'Liberation Serif',serif;line-height:1;font-weight:bold">T</div>
<svg class="a" style="left:1180px;top:560px" width="40" height="320" viewBox="1180 560 40 320"><path d="M1192.5 582.5 H1206 V587.0 H1204.5 V584.3 H1200.3 V593.7 H1202.8 V595.5 H1195.7 V593.7 H1198.2 V584.3 H1194 V587.0 H1192.5 Z" fill="#e2e2e2"/><path d="M1192.5 636.5 H1206 V641.0 H1204.5 V638.3 H1200.3 V647.7 H1202.8 V649.5 H1195.7 V647.7 H1198.2 V638.3 H1194 V641.0 H1192.5 Z" fill="#e2e2e2"/><path d="M1192.5 690.0 H1206 V694.5 H1204.5 V691.8 H1200.3 V701.2 H1202.8 V703.0 H1195.7 V701.2 H1198.2 V691.8 H1194 V694.5 H1192.5 Z" fill="#e2e2e2"/><path d="M1192.5 743.5 H1206 V748.0 H1204.5 V745.3 H1200.3 V754.7 H1202.8 V756.5 H1195.7 V754.7 H1198.2 V745.3 H1194 V748.0 H1192.5 Z" fill="#e2e2e2"/><path d="M1192.5 797.0 H1206 V801.5 H1204.5 V798.8 H1200.3 V808.2 H1202.8 V810.0 H1195.7 V808.2 H1198.2 V798.8 H1194 V801.5 H1192.5 Z" fill="#e2e2e2"/><path d="M1192.5 850.5 H1206 V855.0 H1204.5 V852.3 H1200.3 V861.7 H1202.8 V863.5 H1195.7 V861.7 H1198.2 V852.3 H1194 V855.0 H1192.5 Z" fill="#e2e2e2"/></svg>
<svg class="a" style="left:0;top:160px" width="1500" height="20" viewBox="0 160 1500 20">
<path d="M52 166.5 L54.5 169 L52 171.5 M55.5 166.5 L58 169 L55.5 171.5" fill="none" stroke="#d0d0d0" stroke-width="1"/>
<path d="M1116 166.5 L1113.5 169 L1116 171.5 M1119.5 166.5 L1117 169 L1119.5 171.5" fill="none" stroke="#d0d0d0" stroke-width="1"/>
<path d="M1443 166.5 L1445.5 169 L1443 171.5 M1446.5 166.5 L1449 169 L1446.5 171.5" fill="none" stroke="#d0d0d0" stroke-width="1"/>
</svg>
<div class="a" style="left:665px;top:960.5px;color:#f4f7fa;font-size:19px">4k</div><div class="a" style="left:709px;top:960.5px;color:#f4f7fa;font-size:19px;letter-spacing:1px">3840×2160px</div>
</body></html>
